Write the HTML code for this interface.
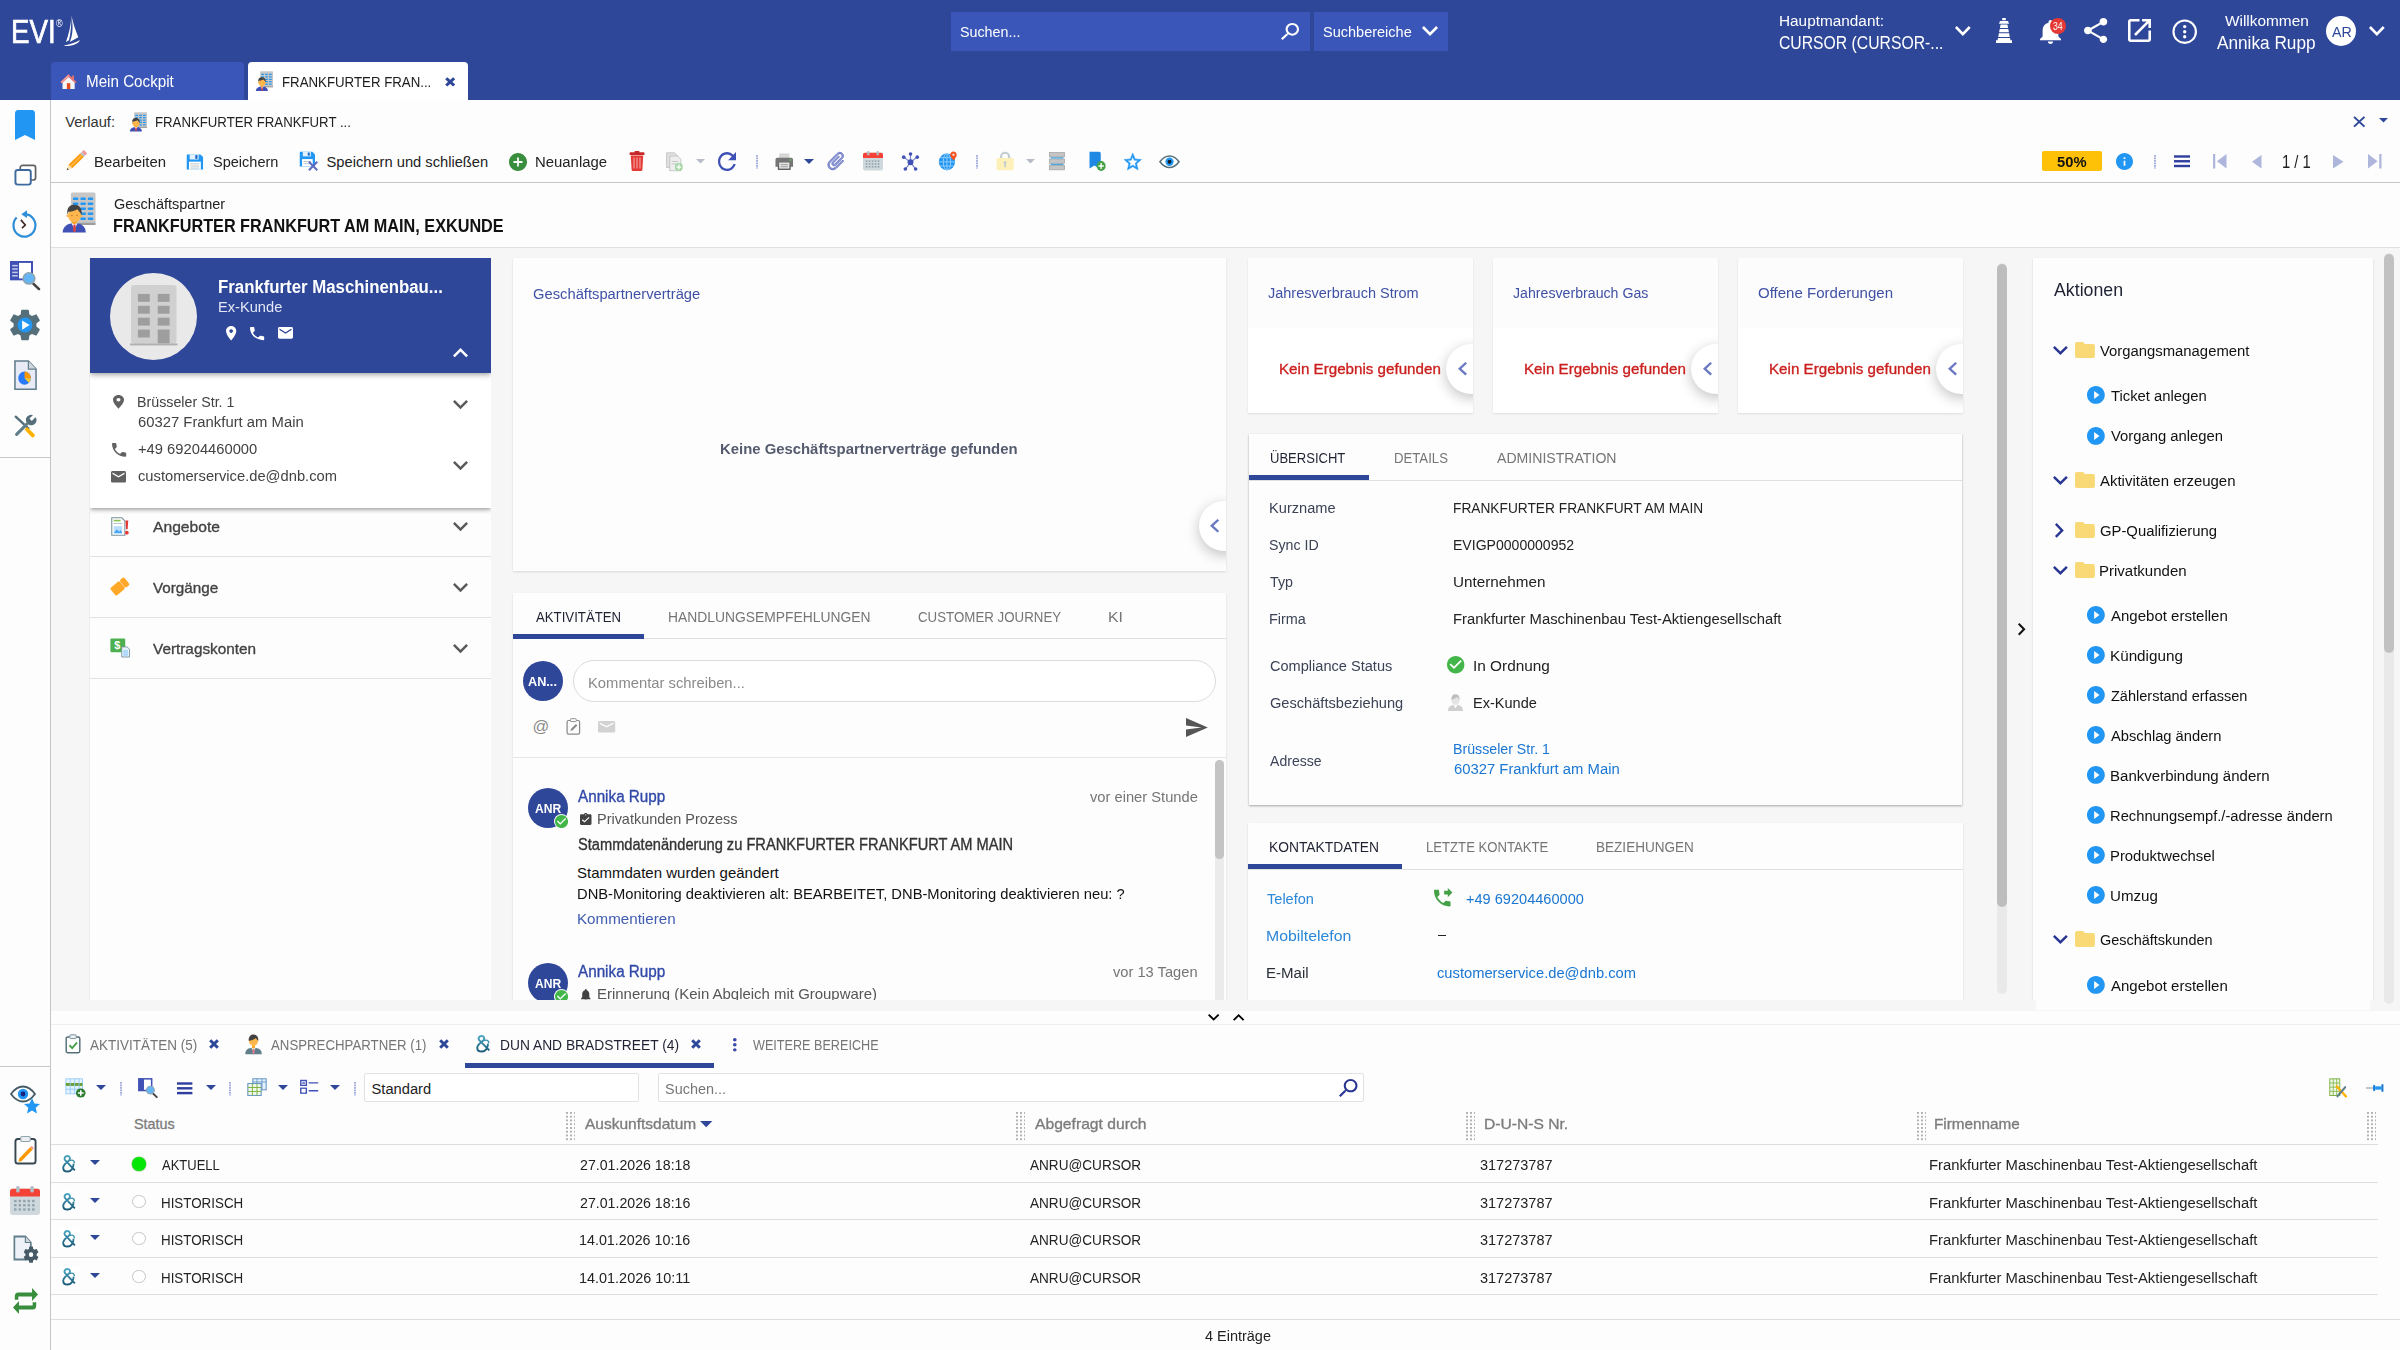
<!DOCTYPE html>
<html lang="de"><head><meta charset="utf-8"><title>EVI - Geschäftspartner</title>
<style>
*{box-sizing:border-box;margin:0;padding:0}
html,body{width:2400px;height:1350px;overflow:hidden;background:#fdfdfd}
body{position:relative;font-family:"Liberation Sans",sans-serif;font-size:15.5px;color:#222}
div,span,svg,header,nav,main,section,h1,h2,a,input,button,ul,li{position:absolute}
.tx{white-space:nowrap;line-height:1.3;transform-origin:0 50%;display:block}
svg{overflow:visible}
</style></head>
<body>
<header style="left:0;top:0;width:2400px;height:100px;background:#2e4799">
<span id="t1" class="tx" style="left:10.89px;top:10.62px;font-size:32.4px;-webkit-text-stroke:0.71px currentColor;color:#fff;transform:scaleX(0.8542)">EVI</span>
<span id="t2" class="tx" style="left:55.80px;top:17.31px;font-size:10px;color:#fff;transform:scaleX(0.9000)">®</span>
<svg class="ic ic-sail" viewBox="63 15 18 31.5" preserveAspectRatio="none" style="left:63px;top:15px;width:18px;height:31.5px;"><path fill="#fff" d="M71.4 15.1C72.6 22 75.5 30.500 78.3 37.3L69.8 42.1C72 37 73.2 30 72.2 22zM71.3 17.1C70.8 26 68.5 35 66 42.1L69 40.3C70.6 34 71.4 26 71.3 17.1zM63.5 45.6C69 44.8 75 43 80.1 40.050C78.5 43.500 75 45 70 45.800C67 46.2 64.5 46.2 63.5 45.6z"/></svg>
<div class="search" style="left:951px;top:12px;width:358.5px;height:39px;background:#3a56b8"></div>
<span id="t3" class="tx" style="left:960.08px;top:22.01px;font-size:15.5px;color:#fff;transform:scaleX(0.9219)">Suchen...</span>
<svg class="ic ic-search" viewBox="3 3 17.5 17.5" preserveAspectRatio="none" style="left:1281px;top:23px;width:18px;height:17px;"><g transform="translate(23.5 0) scale(-1 1)"><path fill="#fff" d="M15.5 14h-.79l-.28-.27C15.41 12.59 16 11.11 16 9.5 16 5.91 13.09 3 9.5 3S3 5.91 3 9.5 5.91 16 9.5 16c1.61 0 3.09-.59 4.23-1.57l.27.28v.79l5 4.99L20.49 19l-4.99-5zm-6 0C7.01 14 5 11.99 5 9.5S7.01 5 9.5 5 14 7.01 14 9.5 11.99 14 9.5 14z"/></g></svg>
<div class="btn" style="left:1314px;top:12px;width:134px;height:39px;background:#3a56b8"></div>
<span id="t4" class="tx" style="left:1322.56px;top:22.01px;font-size:15.5px;color:#fff;transform:scaleX(0.9362)">Suchbereiche</span>
<svg class="ic ic-expand_more" viewBox="6 8.59 12 7.41" preserveAspectRatio="none" style="left:1422px;top:26px;width:16px;height:10px;"><path fill="#fff" d="M16.59 8.59L12 13.17 7.41 8.59 6 10l6 6 6-6z"/></svg>
<span id="t5" class="tx" style="left:1779.31px;top:11.01px;font-size:15.5px;color:#fff;transform:scaleX(0.9904)">Hauptmandant:</span>
<span id="t6" class="tx" style="left:1779.45px;top:30.71px;font-size:18.5px;color:#fff;transform:scaleX(0.8508)">CURSOR (CURSOR-...</span>
<svg class="ic ic-expand_more" viewBox="6 8.59 12 7.41" preserveAspectRatio="none" style="left:1955px;top:25.7px;width:15.7px;height:10px;"><path fill="#fff" d="M16.59 8.59L12 13.17 7.41 8.59 6 10l6 6 6-6z"/></svg>
<svg class="ic ic-lighthouse" viewBox="0 0 16 25" preserveAspectRatio="none" style="left:1996px;top:18.4px;width:16px;height:25px;"><path fill="#fff" d="M6.200 0h3.600v2.200H6.200zM4 3h8l1 2.800H3zM4.600 6.600h6.800l.700 3.400H3.900zM3.700 11h8.600l.600 3.300H3.100zM2.900 15.300h10.200l.700 3.700H2.200zM2 20h12l.500 2.200H16V25H0v-2.800h1.500z"/></svg>
<svg class="ic ic-bell" viewBox="4 2.5 16 19.5" preserveAspectRatio="none" style="left:2040px;top:19.5px;width:21px;height:24px;"><path fill="#fff" d="M12 22c1.1 0 2-.9 2-2h-4c0 1.1.89 2 2 2zm6-6v-5c0-3.07-1.64-5.64-4.5-6.32V4c0-.83-.67-1.5-1.5-1.5s-1.5.67-1.5 1.5v.68C7.63 5.36 6 7.92 6 11v5l-2 2v1h16v-1l-2-2z"/></svg>
<div class="badge" style="left:2049.5px;top:18.3px;width:16px;height:16px;background:#e53935;border-radius:50%"></div>
<span id="t7" class="tx" style="left:2052.50px;top:20.31px;font-size:10.5px;color:#fff;transform:scaleX(0.8333)">34</span>
<svg class="ic ic-share" viewBox="3 2 18 19.92" preserveAspectRatio="none" style="left:2083.7px;top:18.4px;width:23.3px;height:25px;"><path fill="#fff" d="M18 16.08c-.76 0-1.44.3-1.96.77L8.91 12.7c.05-.23.09-.46.09-.7s-.04-.47-.09-.7l7.05-4.11c.54.5 1.25.81 2.04.81 1.66 0 3-1.34 3-3s-1.34-3-3-3-3 1.34-3 3c0 .24.04.47.09.7L8.04 9.81C7.5 9.31 6.79 9 6 9c-1.66 0-3 1.34-3 3s1.34 3 3 3c.79 0 1.5-.31 2.04-.81l7.12 4.16c-.05.21-.08.43-.08.65 0 1.61 1.31 2.92 2.92 2.92 1.61 0 2.92-1.31 2.92-2.92s-1.31-2.92-2.92-2.92z"/></svg>
<svg class="ic ic-open_in_new" viewBox="3 3 18 18" preserveAspectRatio="none" style="left:2128.4px;top:19px;width:23px;height:23px;"><path fill="#fff" d="M19 19H5V5h7V3H5c-1.11 0-2 .9-2 2v14c0 1.1.89 2 2 2h14c1.1 0 2-.9 2-2v-7h-2v7zM14 3v2h3.59l-9.83 9.83 1.41 1.41L19 6.41V10h2V3h-7z"/></svg>
<svg class="ic ic-more_circle" viewBox="0 0 24 24" preserveAspectRatio="none" style="left:2172.3px;top:18.5px;width:25.4px;height:25.4px;"><circle cx="12" cy="12" r="10.6" fill="none" stroke="#fff" stroke-width="2"/><circle cx="12" cy="7.2" r="1.6" fill="#fff"/><circle cx="12" cy="12" r="1.6" fill="#fff"/><circle cx="12" cy="16.8" r="1.6" fill="#fff"/></svg>
<span id="t8" class="tx" style="left:2224.60px;top:11.01px;font-size:15.5px;color:#fff;transform:scaleX(0.9929)">Willkommen</span>
<span id="t9" class="tx" style="left:2217.00px;top:30.71px;font-size:18.5px;color:#fff;transform:scaleX(0.9302)">Annika Rupp</span>
<div class="avatar" style="left:2325.6px;top:15.6px;width:30.8px;height:30.8px;background:#fff;border-radius:50%"></div>
<span id="t10" class="tx" style="left:2331.60px;top:22.01px;font-size:15px;color:#2e4799;transform:scaleX(0.9500)">AR</span>
<svg class="ic ic-expand_more" viewBox="6 8.59 12 7.41" preserveAspectRatio="none" style="left:2368.5px;top:25.7px;width:15.7px;height:10px;"><path fill="#fff" d="M16.59 8.59L12 13.17 7.41 8.59 6 10l6 6 6-6z"/></svg>
<div class="tab" style="left:51px;top:62px;width:193px;height:38px;background:#3a56b8;border-radius:4px 4px 0 0"></div>
<svg class="ic ic-home" viewBox="0 0 24 24" preserveAspectRatio="none" style="left:60.4px;top:72.5px;width:17.2px;height:17.5px;"><path d="M3.5 12.500V22h17v-9.500L12 5z" fill="#f5f5f5"/><path d="M12 1.800L0.800 12.200l1.800 1.900L12 5.400l9.400 8.700 1.800-1.900z" fill="#e57373"/><path d="M12 1.800L0.800 12.200l1.800 1.900L12 5.400z" fill="#ef9a9a"/><rect x="9.600" y="14" width="4.800" height="8" fill="#e64a19"/><rect x="17" y="3.500" width="2.600" height="5" fill="#e57373"/></svg>
<span id="t11" class="tx" style="left:85.54px;top:72.01px;font-size:15.8px;color:#fff;transform:scaleX(0.9615)">Mein Cockpit</span>
<div class="tab active" style="left:248px;top:62px;width:220px;height:38px;background:#fff;border-radius:4px 4px 0 0"></div>
<svg class="ic ic-gp" viewBox="0 0 32 40" preserveAspectRatio="none" style="left:256px;top:70.8px;width:17px;height:20px;"><rect x="7.800" y="0.600" width="24.200" height="32" rx="1.500" fill="#c6c6c6"/><rect x="14" y="30.400" width="18" height="2.200" fill="#9e9e9e"/><g fill="#2196f3"><rect x="9.8" y="5.5" width="5.300" height="2.500" rx="0.800"/><rect x="17.2" y="5.5" width="5.300" height="2.500" rx="0.800"/><rect x="24.4" y="5.5" width="5.300" height="2.500" rx="0.800"/><rect x="9.8" y="10.4" width="5.300" height="2.500" rx="0.800"/><rect x="17.2" y="10.4" width="5.300" height="2.500" rx="0.800"/><rect x="24.4" y="10.4" width="5.300" height="2.500" rx="0.800"/><rect x="9.8" y="15.3" width="5.300" height="2.500" rx="0.800"/><rect x="17.2" y="15.3" width="5.300" height="2.500" rx="0.800"/><rect x="24.4" y="15.3" width="5.300" height="2.500" rx="0.800"/><rect x="9.8" y="20.2" width="5.300" height="2.500" rx="0.800"/><rect x="17.2" y="20.2" width="5.300" height="2.500" rx="0.800"/><rect x="24.4" y="20.2" width="5.300" height="2.500" rx="0.800"/><rect x="9.8" y="25.2" width="5.300" height="2.500" rx="0.800"/><rect x="17.2" y="25.2" width="5.300" height="2.500" rx="0.800"/><rect x="24.4" y="25.2" width="5.300" height="2.500" rx="0.800"/></g><path d="M-0.400 40C0 34 4 30.800 11.300 30.800 18.600 30.800 22.300 34 22.400 40z" fill="#3f51b5"/><path d="M8.300 30.800h6l-3 5.700z" fill="#fff"/><path d="M10.200 32h2.200l.300 6.500-1.400 1.200-1.400-1.200z" fill="#d94545"/><rect x="9" y="28" width="4.600" height="3.400" rx="1.500" fill="#ff9800"/><circle cx="4.700" cy="23.500" r="1.400" fill="#ffb74d"/><circle cx="17.800" cy="23.500" r="1.400" fill="#ffb74d"/><ellipse cx="11.250" cy="23" rx="6.200" ry="7.200" fill="#ffb74d"/><path d="M4.300 22.500C3.400 15 7 12.500 11 12.500c4.600 0 8.200 3 7.300 10.200-1.200-2.500-3-4-4.200-5.700-3 2-7 2.600-8.800 2.600z" fill="#424242"/><circle cx="8.700" cy="23.200" r="0.700" fill="#b5762a"/><circle cx="13.800" cy="23.200" r="0.700" fill="#b5762a"/></svg>
<span id="t12" class="tx" style="left:281.84px;top:72.01px;font-size:15.5px;color:#1b1b1b;transform:scaleX(0.8555)">FRANKFURTER FRAN...</span>
<svg class="ic ic-xmark" viewBox="0 0 10 10" preserveAspectRatio="none" style="left:444.8px;top:76.5px;width:10.4px;height:9.6px;"><path d="M1.200 1.200L8.800 8.800M8.800 1.200L1.200 8.800" stroke="#2e4799" stroke-width="3" fill="none"/></svg>
</header>
<nav style="left:0;top:100px;width:51px;height:1250px;background:#fdfdfd;border-right:1px solid #c4c4c4">
</nav>
<svg class="ic ic-bookmark" viewBox="5 3 14 18" preserveAspectRatio="none" style="left:15px;top:110px;width:20px;height:30px;"><path fill="#2196f3" d="M17 3H7c-1.1 0-1.99.9-1.99 2L5 21l7-3 7 3V5c0-1.1-.9-2-2-2z"/></svg>
<svg class="ic ic-copies" viewBox="0 0 24 24" preserveAspectRatio="none" style="left:13.5px;top:164px;width:23px;height:22px;"><rect x="6.500" y="1.500" width="16" height="16" rx="2.500" fill="#fff" stroke="#616161" stroke-width="1.800"/><rect x="1.500" y="6.500" width="16" height="16" rx="2.500" fill="#fff" stroke="#3d6a9e" stroke-width="2"/></svg>
<svg class="ic ic-history" viewBox="11 202 28 36" preserveAspectRatio="none" style="left:11.3px;top:202.8px;width:26.7px;height:35.2px;"><path d="M26 213.500A11.500 11.500 0 1 1 16.900 216.900" fill="none" stroke="#2e8fd8" stroke-width="2.300"/><path d="M21.800 213.400l6-4v8z" fill="#2e8fd8"/><path d="M21.300 219.300l4.700 5.200-3.500 3.300" fill="none" stroke="#3e2723" stroke-width="1.700"/></svg>
<svg class="ic ic-listsearch" viewBox="0 0 30 30" preserveAspectRatio="none" style="left:9.9px;top:261px;width:30px;height:29px;"><rect x="1" y="1" width="21" height="18" fill="#fff" stroke="#3f51b5" stroke-width="2"/><rect x="1" y="1" width="8" height="18" fill="#3f51b5"/><g fill="#c5cae9"><rect x="2.200" y="4" width="5.600" height="1.600"/><rect x="2.200" y="7.500" width="5.600" height="1.600"/><rect x="2.200" y="11" width="5.600" height="1.600"/><rect x="2.200" y="14.500" width="5.600" height="1.600"/></g><path d="M22 22l7 7" stroke="#424242" stroke-width="2.600" stroke-linecap="round"/><circle cx="19" cy="18" r="5.800" fill="#64b5f6" stroke="#90a4ae" stroke-width="1.600"/></svg>
<svg class="ic ic-gearplay" viewBox="0 0 24 24" preserveAspectRatio="none" style="left:9.9px;top:310px;width:30px;height:30px;"><path d="M19.14 12.94c.04-.3.06-.61.06-.94 0-.32-.02-.64-.07-.94l2.03-1.58c.18-.14.23-.41.12-.61l-1.92-3.32c-.12-.22-.37-.29-.59-.22l-2.39.96c-.5-.38-1.03-.7-1.62-.94l-.36-2.54c-.04-.24-.24-.41-.48-.41h-3.84c-.24 0-.43.17-.47.41l-.36 2.54c-.59.24-1.13.57-1.62.94l-2.39-.96c-.22-.08-.47 0-.59.22L2.74 8.87c-.12.21-.08.47.12.61l2.03 1.58c-.05.3-.09.63-.09.94s.02.64.07.94l-2.03 1.58c-.18.14-.23.41-.12.61l1.92 3.32c.12.22.37.29.59.22l2.39-.96c.5.38 1.03.7 1.62.94l.36 2.54c.05.24.24.41.48.41h3.84c.24 0 .44-.17.47-.41l.36-2.54c.59-.24 1.13-.56 1.62-.94l2.39.96c.22.08.47 0 .59-.22l1.92-3.32c.12-.22.07-.47-.12-.61l-2.01-1.58z" fill="#546e7a" transform="translate(12 12) scale(1.270) translate(-12 -12)"/><circle cx="12" cy="12" r="6" fill="#2196f3"/><path d="M9.700 8.300v7.400l6-3.700z" fill="#fff"/></svg>
<svg class="ic ic-report" viewBox="0 0 24 30" preserveAspectRatio="none" style="left:13.5px;top:359.7px;width:23px;height:30.3px;"><path d="M1 1h14l8 8v20H1z" fill="#e8eaf6" stroke="#607d8b" stroke-width="1.600"/><path d="M15 1v8h8" fill="#cfd8dc" stroke="#607d8b" stroke-width="1.200"/><circle cx="11" cy="18" r="6.500" fill="#2979ff"/><path d="M11 18V11.500a6.500 6.500 0 0 1 6.500 6.500z" fill="#ff9800"/><path d="M11 18h6.500a6.500 6.500 0 0 1-2 4.600z" fill="#ffca28"/></svg>
<svg class="ic ic-tools" viewBox="0 0 28 26" preserveAspectRatio="none" style="left:12.7px;top:414px;width:25.3px;height:23.5px;"><path d="M3 3l14 13" stroke="#546e7a" stroke-width="2.600" stroke-linecap="round"/><path d="M15.500 14.500l8 7.500a2.200 2.200 0 0 1-3.200 3.200l-7.500-8z" fill="#ffb300"/><path d="M4 22.500L16.500 10" stroke="#607d8b" stroke-width="3.400" stroke-linecap="round"/><path d="M24.800 3.200l-4 4-2.600-2.600 4-4a6 6 0 0 0-7.600 7.600l3.500 3.500a6 6 0 0 0 7.600-7.600z" fill="#546e7a" transform="translate(0 0.500)"/></svg>
<div style="left:0px;top:457px;width:50px;height:1px;background:#c9c9c9"></div>
<div style="left:0px;top:1066px;width:50px;height:1px;background:#c9c9c9"></div>
<svg class="ic ic-eyestar" viewBox="0 0 30 30" preserveAspectRatio="none" style="left:10px;top:1085px;width:30px;height:30px;"><path d="M1 9C5 3.500 9 1.500 13 1.500S21 3.500 25 9c-4 5.500-8 7.500-12 7.500S5 14.500 1 9z" fill="#fff" stroke="#455a64" stroke-width="1.800"/><circle cx="13" cy="9" r="5.200" fill="#2196f3"/><circle cx="13" cy="9" r="2.400" fill="#1a237e"/><path d="M22 13l2.400 5.400 5.600.500-4.300 3.800 1.300 5.800-5-3-5 3 1.300-5.800-4.300-3.800 5.600-.500z" fill="#2196f3"/></svg>
<svg class="ic ic-clip_pencil" viewBox="0 0 24 30" preserveAspectRatio="none" style="left:13.5px;top:1135px;width:23px;height:30px;"><rect x="1.500" y="4" width="21" height="24.500" rx="2.500" fill="#fff" stroke="#37474f" stroke-width="2"/><rect x="7" y="1.500" width="10" height="5" rx="1.500" fill="#eceff1" stroke="#90a4ae" stroke-width="1.200"/><path d="M5.500 23.500L17 12l2.500 2.500L8 26l-3.200.800z" fill="#ff9800"/><path d="M17 12l1.300-1.300 2.500 2.500-1.300 1.300z" fill="#ef9a9a"/></svg>
<svg class="ic ic-calendar" viewBox="1 1 22 22" preserveAspectRatio="none" style="left:10px;top:1186px;width:30px;height:29px;"><rect x="1" y="3" width="22" height="20" rx="2" fill="#cfd8dc"/><path d="M1 9V5a2 2 0 0 1 2-2h18a2 2 0 0 1 2 2v4z" fill="#f44336"/><rect x="5.500" y="1" width="2.600" height="5" rx="1.200" fill="#b0bec5"/><rect x="15.900" y="1" width="2.600" height="5" rx="1.200" fill="#b0bec5"/><g fill="#90a4ae"><rect x="4" y="11.5" width="1.800" height="1.800"/><rect x="7.3" y="11.5" width="1.800" height="1.800"/><rect x="10.6" y="11.5" width="1.800" height="1.800"/><rect x="13.9" y="11.5" width="1.800" height="1.800"/><rect x="17.2" y="11.5" width="1.800" height="1.800"/><rect x="4" y="14.7" width="1.800" height="1.800"/><rect x="7.3" y="14.7" width="1.800" height="1.800"/><rect x="10.6" y="14.7" width="1.800" height="1.800"/><rect x="13.9" y="14.7" width="1.800" height="1.800"/><rect x="17.2" y="14.7" width="1.800" height="1.800"/><rect x="4" y="17.9" width="1.800" height="1.800"/><rect x="7.3" y="17.9" width="1.800" height="1.800"/><rect x="10.6" y="17.9" width="1.800" height="1.800"/><rect x="13.9" y="17.9" width="1.800" height="1.800"/><rect x="17.2" y="17.9" width="1.800" height="1.800"/></g></svg>
<svg class="ic ic-docgear" viewBox="0 0 30 30" preserveAspectRatio="none" style="left:12.5px;top:1235px;width:27.5px;height:30px;"><path d="M1.500 1.500h12l6 6v17h-18z" fill="#eef1f8" stroke="#607d8b" stroke-width="1.800"/><path d="M13.500 1.500v6h6" fill="#cfd8dc" stroke="#607d8b" stroke-width="1.200"/><path d="M19.14 12.94c.04-.3.06-.61.06-.94 0-.32-.02-.64-.07-.94l2.03-1.58c.18-.14.23-.41.12-.61l-1.92-3.32c-.12-.22-.37-.29-.59-.22l-2.39.96c-.5-.38-1.03-.7-1.62-.94l-.36-2.54c-.04-.24-.24-.41-.48-.41h-3.84c-.24 0-.43.17-.47.41l-.36 2.54c-.59.24-1.13.57-1.62.94l-2.39-.96c-.22-.08-.47 0-.59.22L2.74 8.87c-.12.21-.08.47.12.61l2.03 1.58c-.05.3-.09.63-.09.94s.02.64.07.94l-2.03 1.58c-.18.14-.23.41-.12.61l1.92 3.32c.12.22.37.29.59.22l2.39-.96c.5.38 1.03.7 1.62.94l.36 2.54c.05.24.24.41.48.41h3.84c.24 0 .44-.17.47-.41l.36-2.54c.59-.24 1.13-.56 1.62-.94l2.39.96c.22.08.47 0 .59-.22l1.92-3.32c.12-.22.07-.47-.12-.61l-2.01-1.58z" fill="#455a64" transform="translate(9.500 9.500) scale(0.850)"/><circle cx="19.700" cy="19.700" r="2.400" fill="#fff"/></svg>
<svg class="ic ic-repeat_green" viewBox="1.5 2 21 20" preserveAspectRatio="none" style="left:12.5px;top:1287.5px;width:25px;height:26px;"><path d="M3 11V8.500a3 3 0 0 1 3-3h11.500V2l5 5-5 5V8.500H6V11zM21 13v2.500a3 3 0 0 1-3 3H6.500V22l-5-5 5-5v3.500H18V13z" fill="#388e3c"/></svg>
<section class="topbars" style="left:51px;top:100px;width:2349px;height:148px;background:#fdfdfd">
</section>
<span id="t13" class="tx" style="left:65.20px;top:113.01px;font-size:14.7px;color:#333;transform:scaleX(1.0000)">Verlauf:</span>
<svg class="ic ic-gp" viewBox="0 0 32 40" preserveAspectRatio="none" style="left:130px;top:111.5px;width:17px;height:19.5px;"><rect x="7.800" y="0.600" width="24.200" height="32" rx="1.500" fill="#c6c6c6"/><rect x="14" y="30.400" width="18" height="2.200" fill="#9e9e9e"/><g fill="#2196f3"><rect x="9.8" y="5.5" width="5.300" height="2.500" rx="0.800"/><rect x="17.2" y="5.5" width="5.300" height="2.500" rx="0.800"/><rect x="24.4" y="5.5" width="5.300" height="2.500" rx="0.800"/><rect x="9.8" y="10.4" width="5.300" height="2.500" rx="0.800"/><rect x="17.2" y="10.4" width="5.300" height="2.500" rx="0.800"/><rect x="24.4" y="10.4" width="5.300" height="2.500" rx="0.800"/><rect x="9.8" y="15.3" width="5.300" height="2.500" rx="0.800"/><rect x="17.2" y="15.3" width="5.300" height="2.500" rx="0.800"/><rect x="24.4" y="15.3" width="5.300" height="2.500" rx="0.800"/><rect x="9.8" y="20.2" width="5.300" height="2.500" rx="0.800"/><rect x="17.2" y="20.2" width="5.300" height="2.500" rx="0.800"/><rect x="24.4" y="20.2" width="5.300" height="2.500" rx="0.800"/><rect x="9.8" y="25.2" width="5.300" height="2.500" rx="0.800"/><rect x="17.2" y="25.2" width="5.300" height="2.500" rx="0.800"/><rect x="24.4" y="25.2" width="5.300" height="2.500" rx="0.800"/></g><path d="M-0.400 40C0 34 4 30.800 11.300 30.800 18.600 30.800 22.300 34 22.400 40z" fill="#3f51b5"/><path d="M8.300 30.800h6l-3 5.700z" fill="#fff"/><path d="M10.200 32h2.200l.300 6.500-1.400 1.200-1.400-1.200z" fill="#d94545"/><rect x="9" y="28" width="4.600" height="3.400" rx="1.500" fill="#ff9800"/><circle cx="4.700" cy="23.500" r="1.400" fill="#ffb74d"/><circle cx="17.800" cy="23.500" r="1.400" fill="#ffb74d"/><ellipse cx="11.250" cy="23" rx="6.200" ry="7.200" fill="#ffb74d"/><path d="M4.300 22.500C3.400 15 7 12.500 11 12.500c4.600 0 8.200 3 7.300 10.200-1.200-2.500-3-4-4.200-5.700-3 2-7 2.600-8.800 2.600z" fill="#424242"/><circle cx="8.700" cy="23.200" r="0.700" fill="#b5762a"/><circle cx="13.800" cy="23.200" r="0.700" fill="#b5762a"/></svg>
<span id="t14" class="tx" style="left:154.90px;top:113.01px;font-size:14.7px;color:#222;transform:scaleX(0.8991)">FRANKFURTER FRANKFURT ...</span>
<svg class="ic ic-xthin" viewBox="0 0 12 12" preserveAspectRatio="none" style="left:2352.5px;top:116px;width:12.5px;height:11.5px;"><path d="M1 1L11 11M11 1L1 11" stroke="#2e4799" stroke-width="1.900" fill="none"/></svg>
<svg class="ic ic-tri_down" viewBox="0 0 10 5" preserveAspectRatio="none" style="left:2378.5px;top:117.5px;width:9px;height:4.5px;"><path fill="#2e4799" d="M0 0h10L5 5z"/></svg>
<svg class="ic ic-pencil" viewBox="0 0 24 24" preserveAspectRatio="none" style="left:65.6px;top:151px;width:20.2px;height:19.8px;"><g transform="rotate(45 12 12) translate(12 12) scale(1.22) translate(-12 -12.500)"><rect x="9.500" y="-0.500" width="5" height="3.200" rx="1" fill="#ef9a9a"/><rect x="9.500" y="2.700" width="5" height="1.800" fill="#b0bec5"/><rect x="9.500" y="4.500" width="5" height="16" fill="#ff9800"/><rect x="11.200" y="4.500" width="1.600" height="16" fill="#ffb74d"/><path d="M9.500 20.500h5L12 25.500z" fill="#ffe0b2"/><path d="M11 23.500h2L12 25.500z" fill="#424242"/></g></svg>
<span id="t15" class="tx" style="left:94.19px;top:153.01px;font-size:14.7px;color:#222;transform:scaleX(1.0145)">Bearbeiten</span>
<svg class="ic ic-floppy" viewBox="0 0 24 24" preserveAspectRatio="none" style="left:186px;top:152.5px;width:17.8px;height:17.3px;"><path d="M1 2h18.500L23 5.500V23H1z" fill="#2196f3"/><rect x="5" y="2" width="12" height="7" fill="#e3f2fd"/><rect x="12.500" y="3" width="3" height="5" fill="#1565c0"/><rect x="4" y="12" width="16" height="11" fill="#fff"/><rect x="6" y="14.500" width="12" height="1.200" fill="#b0bec5"/><rect x="6" y="17.500" width="12" height="1.200" fill="#b0bec5"/><rect x="6" y="20.300" width="12" height="1.200" fill="#b0bec5"/></svg>
<span id="t16" class="tx" style="left:213.21px;top:153.01px;font-size:14.7px;color:#222;transform:scaleX(0.9892)">Speichern</span>
<svg class="ic ic-floppy_x" viewBox="0 0 26 26" preserveAspectRatio="none" style="left:299px;top:151px;width:19.8px;height:20px;"><path d="M1 1h16.500L21 4.500V20H1z" fill="#2196f3"/><rect x="5" y="1" width="10.500" height="6" fill="#e3f2fd"/><rect x="11.500" y="2" width="2.600" height="4" fill="#1565c0"/><rect x="4" y="10.500" width="14" height="9.500" fill="#fff"/><rect x="6" y="13" width="10" height="1.100" fill="#b0bec5"/><rect x="6" y="16" width="10" height="1.100" fill="#b0bec5"/><path d="M13 14l11 11M24 14L13 25" stroke="#5c6bc0" stroke-width="2.600" fill="none"/></svg>
<span id="t17" class="tx" style="left:326.50px;top:153.01px;font-size:14.7px;color:#222;transform:scaleX(1.0000)">Speichern und schließen</span>
<svg class="ic ic-add_circle" viewBox="2 2 20 20" preserveAspectRatio="none" style="left:509px;top:152.5px;width:18px;height:18px;"><path fill="#388e3c" d="M12 2C6.48 2 2 6.48 2 12s4.48 10 10 10 10-4.48 10-10S17.52 2 12 2zm5 11h-4v4h-2v-4H7v-2h4V7h2v4h4v2z"/></svg>
<span id="t18" class="tx" style="left:535.49px;top:153.01px;font-size:14.7px;color:#222;transform:scaleX(1.0143)">Neuanlage</span>
<svg class="ic ic-delete" viewBox="0 0 16 20" preserveAspectRatio="none" style="left:629px;top:151px;width:16px;height:20px;"><rect x="5.500" y="0" width="5" height="2" rx="0.800" fill="#c62828"/><rect x="0.500" y="1.300" width="15" height="2.700" rx="1" fill="#c62828"/><path d="M1.800 4.500h12.400l-.800 14a1.500 1.500 0 0 1-1.500 1.500H4.100a1.500 1.500 0 0 1-1.500-1.500z" fill="#e53935"/><g fill="#ef8a87"><rect x="4.300" y="6.500" width="1.500" height="11"/><rect x="7.250" y="6.500" width="1.500" height="11"/><rect x="10.200" y="6.500" width="1.500" height="11"/></g></svg>
<svg class="ic ic-copydoc" viewBox="0 0 24 24" preserveAspectRatio="none" style="left:665px;top:151.5px;width:19px;height:19.5px;"><path d="M2 1h10l4 4v14H2z" fill="#e0e0e0" stroke="#bdbdbd" stroke-width="1"/><path d="M6 5h10l4 4v14H6z" fill="#eeeeee" stroke="#bdbdbd" stroke-width="1"/><g fill="#c8c8c8"><rect x="8.500" y="11" width="8" height="1.300"/><rect x="8.500" y="14" width="8" height="1.300"/></g><circle cx="17.500" cy="18.500" r="5" fill="#a5d6a7"/><path d="M17.500 15.500v6M14.500 18.500h6" stroke="#fff" stroke-width="1.600"/></svg>
<svg class="ic ic-tri_down" viewBox="0 0 10 5" preserveAspectRatio="none" style="left:696px;top:159px;width:9px;height:4.5px;"><path fill="#b8bcc8" d="M0 0h10L5 5z"/></svg>
<svg class="ic ic-refresh" viewBox="4 4 16 16" preserveAspectRatio="none" style="left:718px;top:152px;width:18px;height:19px;"><path fill="#3f51b5" d="M17.65 6.35C16.2 4.9 14.21 4 12 4c-4.42 0-7.99 3.58-7.99 8s3.57 8 7.99 8c3.73 0 6.84-2.55 7.73-6h-2.08c-.82 2.33-3.04 4-5.65 4-3.31 0-6-2.69-6-6s2.69-6 6-6c1.66 0 3.14.69 4.22 1.78L13 11h7V4l-2.35 2.35z"/></svg>
<svg class="ic ic-vsep" viewBox="0 0 2 14" preserveAspectRatio="none" style="left:755.5px;top:154.5px;width:2px;height:13.5px;"><path d="M1 0v14" stroke="#7986cb" stroke-width="1.300" stroke-dasharray="1.700 0.900" fill="none"/></svg>
<svg class="ic ic-print" viewBox="0 0 20 18" preserveAspectRatio="none" style="left:775px;top:153px;width:18.5px;height:17px;"><path d="M4.500 0.500h11v5h-11z" fill="#d6d6d6"/><path d="M2.500 5h15a2 2 0 0 1 2 2v7.500h-19V7a2 2 0 0 1 2-2z" fill="#757575"/><circle cx="16.800" cy="7.300" r="0.900" fill="#66bb6a"/><rect x="3" y="13" width="14" height="5" rx="0.800" fill="#616161"/><rect x="4.500" y="10.200" width="11" height="6.300" fill="#e8e8e8"/><rect x="6" y="11.800" width="8" height="1.100" fill="#9e9e9e"/><rect x="6" y="14" width="8" height="1.100" fill="#9e9e9e"/></svg>
<svg class="ic ic-tri_down" viewBox="0 0 10 5" preserveAspectRatio="none" style="left:804px;top:159px;width:10px;height:5px;"><path fill="#2e4799" d="M0 0h10L5 5z"/></svg>
<svg class="ic ic-attach" viewBox="0 0 24 24" preserveAspectRatio="none" style="left:826px;top:151px;width:20px;height:20px;"><g transform="rotate(45 12 12) translate(12 12) scale(1.080) translate(-12 -12)"><path fill="#9fa8da" stroke="#5c6bc0" stroke-width="0.900" d="M16.500 6v11.500c0 2.210-1.790 4-4 4s-4-1.790-4-4V5c0-1.380 1.120-2.500 2.500-2.500s2.500 1.120 2.500 2.500v10.500c0 .550-.450 1-1 1s-1-.450-1-1V6H10v9.500c0 1.380 1.120 2.500 2.500 2.500s2.500-1.120 2.500-2.500V5c0-2.210-1.790-4-4-4S7 2.790 7 5v12.500c0 3.040 2.460 5.500 5.500 5.500s5.500-2.460 5.500-5.500V6h-1.500z"/></g></svg>
<svg class="ic ic-calendar" viewBox="1 1 22 22" preserveAspectRatio="none" style="left:863px;top:151px;width:20px;height:19.5px;"><rect x="1" y="3" width="22" height="20" rx="2" fill="#cfd8dc"/><path d="M1 9V5a2 2 0 0 1 2-2h18a2 2 0 0 1 2 2v4z" fill="#f44336"/><rect x="5.500" y="1" width="2.600" height="5" rx="1.200" fill="#b0bec5"/><rect x="15.900" y="1" width="2.600" height="5" rx="1.200" fill="#b0bec5"/><g fill="#90a4ae"><rect x="4" y="11.5" width="1.800" height="1.800"/><rect x="7.3" y="11.5" width="1.800" height="1.800"/><rect x="10.6" y="11.5" width="1.800" height="1.800"/><rect x="13.9" y="11.5" width="1.800" height="1.800"/><rect x="17.2" y="11.5" width="1.800" height="1.800"/><rect x="4" y="14.7" width="1.800" height="1.800"/><rect x="7.3" y="14.7" width="1.800" height="1.800"/><rect x="10.6" y="14.7" width="1.800" height="1.800"/><rect x="13.9" y="14.7" width="1.800" height="1.800"/><rect x="17.2" y="14.7" width="1.800" height="1.800"/><rect x="4" y="17.9" width="1.800" height="1.800"/><rect x="7.3" y="17.9" width="1.800" height="1.800"/><rect x="10.6" y="17.9" width="1.800" height="1.800"/><rect x="13.9" y="17.9" width="1.800" height="1.800"/><rect x="17.2" y="17.9" width="1.800" height="1.800"/></g></svg>
<svg class="ic ic-network" viewBox="0 0 24 24" preserveAspectRatio="none" style="left:901px;top:152px;width:19px;height:19px;"><g stroke="#7986cb" stroke-width="1.500"><path d="M12 13L3.500 6.500M12 13l8.500-6.500M12 13L5.500 21.500M12 13l6.500 8.500M12 13V2.500"/></g><circle cx="12" cy="13" r="3.700" fill="#3f51b5"/><g fill="#3f51b5"><circle cx="3.500" cy="6.500" r="2.300"/><circle cx="20.500" cy="6.500" r="2.300"/><circle cx="5.500" cy="21.500" r="2.300"/><circle cx="18.500" cy="21.500" r="2.300"/><circle cx="12" cy="2.500" r="2.300"/></g></svg>
<svg class="ic ic-globe" viewBox="0 0 24 24" preserveAspectRatio="none" style="left:938px;top:151px;width:19.5px;height:20px;"><circle cx="11" cy="13" r="10" fill="#2196f3"/><g fill="none" stroke="#90caf9" stroke-width="1.200"><ellipse cx="11" cy="13" rx="4.500" ry="10"/><path d="M1 13h20M2.500 8h17M2.500 18h17M11 3v20"/></g><path d="M19 0.500c-2.200 0-4 1.700-4 3.900 0 3 4 6.600 4 6.600s4-3.600 4-6.600c0-2.200-1.800-3.900-4-3.900z" fill="#f4511e"/><circle cx="19" cy="4.400" r="1.500" fill="#ffccbc"/></svg>
<svg class="ic ic-vsep" viewBox="0 0 2 14" preserveAspectRatio="none" style="left:976px;top:154.5px;width:2px;height:13.5px;"><path d="M1 0v14" stroke="#7986cb" stroke-width="1.300" stroke-dasharray="1.700 0.900" fill="none"/></svg>
<svg class="ic ic-lock_pale" viewBox="0 0 18 20" preserveAspectRatio="none" style="left:995.8px;top:151px;width:18.2px;height:19.8px;"><path d="M5 8V5.800a4 4 0 0 1 8 0V8" fill="none" stroke="#c3ccd1" stroke-width="2.200"/><rect x="0.500" y="7" width="17" height="12.500" rx="1.300" fill="#fdf0b8"/><circle cx="9" cy="11.800" r="1.500" fill="#c3ccd1"/><rect x="8.200" y="11.800" width="1.600" height="4.800" rx="0.500" fill="#c3ccd1"/></svg>
<svg class="ic ic-tri_down" viewBox="0 0 10 5" preserveAspectRatio="none" style="left:1026px;top:159px;width:9px;height:4.5px;"><path fill="#b8bcc8" d="M0 0h10L5 5z"/></svg>
<svg class="ic ic-stack" viewBox="0 0 16 18" preserveAspectRatio="none" style="left:1049px;top:151.7px;width:16px;height:18.3px;"><g fill="#c4c4c4" stroke="#a8a8a8" stroke-width="0.800"><rect x="0.500" y="0.500" width="15" height="4.200"/><rect x="0.500" y="6.900" width="15" height="4.200"/><rect x="0.500" y="13.300" width="15" height="4.200"/></g><g fill="#4fa8dc"><rect x="1.500" y="5.100" width="13" height="1.400"/><rect x="1.500" y="11.500" width="13" height="1.400"/></g></svg>
<svg class="ic ic-bookmark_plus" viewBox="0 0 24 24" preserveAspectRatio="none" style="left:1087.5px;top:151px;width:18px;height:20px;"><path d="M3 1h13a2 2 0 0 1 2 2v19l-8.500-4.500L3 21z" fill="#1e88e5" transform="translate(-1 0)"/><circle cx="17.500" cy="18" r="6" fill="#43a047"/><path d="M17.500 14.500v7M14 18h7" stroke="#fff" stroke-width="1.800"/></svg>
<svg class="ic ic-star_border" viewBox="2 2 20 19" preserveAspectRatio="none" style="left:1123.5px;top:152.5px;width:17.5px;height:17px;stroke:#2196f3;stroke-width:0.5"><path fill="#2196f3" d="M22 9.24l-7.19-.62L12 2 9.19 8.63 2 9.24l5.46 4.73L5.82 21 12 17.27 18.18 21l-1.63-7.03L22 9.24zM12 15.4l-3.76 2.27 1-4.28-3.32-2.88 4.38-.38L12 6.1l1.71 4.04 4.38.38-3.32 2.88 1 4.28L12 15.4z"/></svg>
<svg class="ic ic-eye_icon" viewBox="0 0 22 14" preserveAspectRatio="none" style="left:1158.5px;top:154.5px;width:21px;height:13.5px;"><path d="M1 7C4.500 2.300 7.800 1 11 1s6.500 1.300 10 6c-3.500 4.700-6.800 6-10 6S4.500 11.700 1 7z" fill="#fff" stroke="#546e7a" stroke-width="1.600"/><circle cx="11" cy="7" r="4.300" fill="#2196f3"/><circle cx="11" cy="7" r="2" fill="#0d1b2a"/></svg>
<div class="pct" style="left:2042px;top:151px;width:60px;height:20px;background:#ffc107;border-radius:2px"></div>
<span id="t19" class="tx" style="left:2057.00px;top:152.01px;font-size:15px;font-weight:700;color:#111;transform:scaleX(0.9833)">50%</span>
<svg class="ic ic-info" viewBox="2 2 20 20" preserveAspectRatio="none" style="left:2116px;top:152.5px;width:17px;height:17px;"><path fill="#2196f3" d="M12 2C6.48 2 2 6.48 2 12s4.48 10 10 10 10-4.48 10-10S17.52 2 12 2zm1 15h-2v-6h2v6zm0-8h-2V7h2v2z"/></svg>
<svg class="ic ic-vsep" viewBox="0 0 2 14" preserveAspectRatio="none" style="left:2153.5px;top:154.5px;width:2px;height:13.5px;"><path d="M1 0v14" stroke="#7986cb" stroke-width="1.300" stroke-dasharray="1.700 0.900" fill="none"/></svg>
<svg class="ic ic-menu_bold" viewBox="0 0 16 13" preserveAspectRatio="none" style="left:2174px;top:155px;width:16px;height:12.5px;"><g fill="#303f9f"><rect x="0" y="0.300" width="16" height="2.500"/><rect x="0" y="5.250" width="16" height="2.500"/><rect x="0" y="10.200" width="16" height="2.500"/></g></svg>
<svg class="ic ic-skip_prev" viewBox="6 6 12 12" preserveAspectRatio="none" style="left:2212.5px;top:154px;width:13.5px;height:14.5px;"><path fill="#aeb6dc" d="M6 6h2v12H6zm3.5 6l8.5 6V6z"/></svg>
<svg class="ic ic-tri_left" viewBox="8 6 10 12" preserveAspectRatio="none" style="left:2251.5px;top:154.5px;width:9.5px;height:13.5px;"><path fill="#aeb6dc" d="M18 6v12L8 12z"/></svg>
<span id="t20" class="tx" style="left:2282.18px;top:151.02px;font-size:18px;color:#222;transform:scaleX(0.8235)">1 / 1</span>
<svg class="ic ic-tri_right" viewBox="8 6 10 12" preserveAspectRatio="none" style="left:2332.5px;top:154.5px;width:10.5px;height:13.5px;"><path fill="#aeb6dc" d="M8 6v12l10-6z"/></svg>
<svg class="ic ic-skip_next" viewBox="6 6 12 12" preserveAspectRatio="none" style="left:2367.5px;top:154px;width:13.5px;height:14.5px;"><path fill="#aeb6dc" d="M6 18l8.5-6L6 6v12zM16 6v12h2V6h-2z"/></svg>
<div style="left:51px;top:182px;width:2349px;height:1px;background:#c4c4c4"></div>
<svg class="ic ic-gp" viewBox="0 0 32 40" preserveAspectRatio="none" style="left:62.8px;top:192px;width:32.5px;height:40.5px;"><rect x="7.800" y="0.600" width="24.200" height="32" rx="1.500" fill="#c6c6c6"/><rect x="14" y="30.400" width="18" height="2.200" fill="#9e9e9e"/><g fill="#2196f3"><rect x="9.8" y="5.5" width="5.300" height="2.500" rx="0.800"/><rect x="17.2" y="5.5" width="5.300" height="2.500" rx="0.800"/><rect x="24.4" y="5.5" width="5.300" height="2.500" rx="0.800"/><rect x="9.8" y="10.4" width="5.300" height="2.500" rx="0.800"/><rect x="17.2" y="10.4" width="5.300" height="2.500" rx="0.800"/><rect x="24.4" y="10.4" width="5.300" height="2.500" rx="0.800"/><rect x="9.8" y="15.3" width="5.300" height="2.500" rx="0.800"/><rect x="17.2" y="15.3" width="5.300" height="2.500" rx="0.800"/><rect x="24.4" y="15.3" width="5.300" height="2.500" rx="0.800"/><rect x="9.8" y="20.2" width="5.300" height="2.500" rx="0.800"/><rect x="17.2" y="20.2" width="5.300" height="2.500" rx="0.800"/><rect x="24.4" y="20.2" width="5.300" height="2.500" rx="0.800"/><rect x="9.8" y="25.2" width="5.300" height="2.500" rx="0.800"/><rect x="17.2" y="25.2" width="5.300" height="2.500" rx="0.800"/><rect x="24.4" y="25.2" width="5.300" height="2.500" rx="0.800"/></g><path d="M-0.400 40C0 34 4 30.800 11.300 30.800 18.600 30.800 22.300 34 22.400 40z" fill="#3f51b5"/><path d="M8.300 30.800h6l-3 5.700z" fill="#fff"/><path d="M10.200 32h2.200l.300 6.500-1.400 1.200-1.400-1.200z" fill="#d94545"/><rect x="9" y="28" width="4.600" height="3.400" rx="1.500" fill="#ff9800"/><circle cx="4.700" cy="23.500" r="1.400" fill="#ffb74d"/><circle cx="17.800" cy="23.500" r="1.400" fill="#ffb74d"/><ellipse cx="11.250" cy="23" rx="6.200" ry="7.200" fill="#ffb74d"/><path d="M4.300 22.500C3.400 15 7 12.500 11 12.500c4.600 0 8.200 3 7.300 10.200-1.200-2.500-3-4-4.200-5.700-3 2-7 2.600-8.800 2.600z" fill="#424242"/><circle cx="8.700" cy="23.200" r="0.700" fill="#b5762a"/><circle cx="13.800" cy="23.200" r="0.700" fill="#b5762a"/></svg>
<span id="t21" class="tx" style="left:114.00px;top:195.01px;font-size:14.7px;color:#222;transform:scaleX(0.9867)">Geschäftspartner</span>
<h1 style="left:0;top:0;width:0;height:0;font-weight:normal;font-size:inherit">
<span id="t22" class="tx" style="left:113.10px;top:215.02px;font-size:18px;font-weight:700;color:#111;transform:scaleX(0.9016)">FRANKFURTER FRANKFURT AM MAIN, EXKUNDE</span>
</h1>
<div style="left:51px;top:247px;width:2349px;height:1px;background:#e0e0e0"></div>
<main style="left:51px;top:248px;width:2349px;height:763px;background:#f6f6f6">
</main>
<div style="left:2384px;top:253px;width:10px;height:751px;background:#e9e9e9;border-radius:5px"></div>
<div style="left:2384px;top:254px;width:10px;height:399px;background:#c1c1c1;border-radius:5px"></div>
<div style="left:1997.4px;top:263px;width:9.4px;height:731px;background:#e9e9e9;border-radius:5px"></div>
<div style="left:1997.4px;top:264px;width:9.4px;height:643px;background:#bdbdbd;border-radius:5px"></div>
<svg class="ic ic-chevron_right" viewBox="8.59 6 7.41 12" preserveAspectRatio="none" style="left:2018.3px;top:623px;width:7.5px;height:12.5px;"><path fill="#111" d="M10 6L8.59 7.41 13.17 12l-4.58 4.59L10 18l6-6z"/></svg>
<section class="card gp" style="left:90px;top:258px;width:401px;height:742px;background:#fdfdfd;overflow:hidden;box-shadow:-1px 0 0 #ededed">
<div class="contact" style="left:0;top:115px;width:401px;height:135px;background:#fff;box-shadow:0 1px 5px rgba(0,0,0,.48)"></div>
<div class="gphead" style="left:0;top:0;width:401px;height:115px;background:#2e4799;box-shadow:0 1px 6px rgba(0,0,0,.45)"></div>
</section>
<div style="left:109.7px;top:272.9px;width:87.2px;height:87.2px;background:#e9e9e9;border-radius:50%"></div>
<svg class="ic ic-building" viewBox="0 0 48 64" preserveAspectRatio="none" style="left:129.5px;top:284.3px;width:47.5px;height:63.4px;"><rect x="1" y="1" width="46" height="59" rx="3" fill="#d0d0d0"/><g fill="#9e9e9e"><rect x="8" y="10" width="12" height="8"/><rect x="28" y="10" width="12" height="8"/><rect x="8" y="22" width="12" height="8"/><rect x="28" y="22" width="12" height="8"/><rect x="8" y="34" width="12" height="8"/><rect x="28" y="34" width="12" height="8"/><rect x="8" y="46" width="12" height="8"/><rect x="28" y="46" width="12" height="14"/></g><rect x="0" y="60" width="48" height="2" fill="#b0b0b0"/></svg>
<span id="t23" class="tx" style="left:218.08px;top:274.82px;font-size:18.3px;font-weight:700;color:#fff;transform:scaleX(0.9185)">Frankfurter Maschinenbau...</span>
<span id="t24" class="tx" style="left:218.00px;top:298.20px;font-size:14.7px;color:#e3e7f6;transform:scaleX(0.9968)">Ex-Kunde</span>
<svg class="ic ic-place" viewBox="5 2 14 20" preserveAspectRatio="none" style="left:225.5px;top:325.9px;width:10.3px;height:14.6px;"><path fill="#fff" d="M12 2C8.13 2 5 5.13 5 9c0 5.25 7 13 7 13s7-7.75 7-13c0-3.87-3.13-7-7-7zm0 9.5c-1.38 0-2.5-1.12-2.5-2.5s1.12-2.5 2.5-2.5 2.5 1.12 2.5 2.5-1.12 2.5-2.5 2.5z"/></svg>
<svg class="ic ic-phone" viewBox="3 3 18 18" preserveAspectRatio="none" style="left:250.4px;top:326.5px;width:14.2px;height:13.2px;"><path fill="#fff" d="M6.62 10.79c1.44 2.83 3.76 5.14 6.59 6.59l2.2-2.2c.27-.27.67-.36 1.02-.24 1.12.37 2.33.57 3.57.57.55 0 1 .45 1 1V20c0 .55-.45 1-1 1-9.39 0-17-7.61-17-17 0-.55.45-1 1-1h3.5c.55 0 1 .45 1 1 0 1.25.2 2.45.57 3.57.11.35.03.74-.25 1.02l-2.2 2.2z"/></svg>
<svg class="ic ic-mail" viewBox="2 4 20 16" preserveAspectRatio="none" style="left:278px;top:327px;width:15px;height:11.8px;"><path fill="#fff" d="M20 4H4c-1.1 0-1.99.9-1.99 2L2 18c0 1.1.9 2 2 2h16c1.1 0 2-.9 2-2V6c0-1.1-.9-2-2-2zm0 4l-8 5-8-5V6l8 5 8-5v2z"/></svg>
<svg class="ic ic-expand_less" viewBox="6 8 12 7.41" preserveAspectRatio="none" style="left:452.5px;top:348.3px;width:15px;height:9.2px;"><path fill="#fff" d="M12 8l-6 6 1.41 1.41L12 10.83l4.59 4.58L18 14z"/></svg>
<svg class="ic ic-place" viewBox="5 2 14 20" preserveAspectRatio="none" style="left:113px;top:395px;width:11px;height:13.7px;"><path fill="#616161" d="M12 2C8.13 2 5 5.13 5 9c0 5.25 7 13 7 13s7-7.75 7-13c0-3.87-3.13-7-7-7zm0 9.5c-1.38 0-2.5-1.12-2.5-2.5s1.12-2.5 2.5-2.5 2.5 1.12 2.5 2.5-1.12 2.5-2.5 2.5z"/></svg>
<span id="t25" class="tx" style="left:136.63px;top:393.01px;font-size:14.7px;color:#424242;transform:scaleX(0.9707)">Brüsseler Str. 1</span>
<span id="t26" class="tx" style="left:137.60px;top:412.70px;font-size:14.7px;color:#424242;transform:scaleX(1.0098)">60327 Frankfurt am Main</span>
<svg class="ic ic-expand_more" viewBox="6 8.59 12 7.41" preserveAspectRatio="none" style="left:452.5px;top:399.5px;width:15px;height:9.2px;"><path fill="#5a5a5a" d="M16.59 8.59L12 13.17 7.41 8.59 6 10l6 6 6-6z"/></svg>
<svg class="ic ic-phone" viewBox="3 3 18 18" preserveAspectRatio="none" style="left:111.8px;top:442.7px;width:14.2px;height:13.7px;"><path fill="#616161" d="M6.62 10.79c1.44 2.83 3.76 5.14 6.59 6.59l2.2-2.2c.27-.27.67-.36 1.02-.24 1.12.37 2.33.57 3.57.57.55 0 1 .45 1 1V20c0 .55-.45 1-1 1-9.39 0-17-7.61-17-17 0-.55.45-1 1-1h3.5c.55 0 1 .45 1 1 0 1.25.2 2.45.57 3.57.11.35.03.74-.25 1.02l-2.2 2.2z"/></svg>
<span id="t27" class="tx" style="left:137.60px;top:440.01px;font-size:14.7px;color:#424242;transform:scaleX(1.0034)">+49 69204460000</span>
<svg class="ic ic-mail" viewBox="2 4 20 16" preserveAspectRatio="none" style="left:111px;top:471px;width:15px;height:11.6px;"><path fill="#616161" d="M20 4H4c-1.1 0-1.99.9-1.99 2L2 18c0 1.1.9 2 2 2h16c1.1 0 2-.9 2-2V6c0-1.1-.9-2-2-2zm0 4l-8 5-8-5V6l8 5 8-5v2z"/></svg>
<span id="t28" class="tx" style="left:137.60px;top:467.20px;font-size:14.7px;color:#424242;transform:scaleX(1.0020)">customerservice.de@dnb.com</span>
<svg class="ic ic-expand_more" viewBox="6 8.59 12 7.41" preserveAspectRatio="none" style="left:452.5px;top:460.8px;width:15px;height:9.2px;"><path fill="#5a5a5a" d="M16.59 8.59L12 13.17 7.41 8.59 6 10l6 6 6-6z"/></svg>
<svg class="ic ic-offer" viewBox="0 0 24 24" preserveAspectRatio="none" style="left:111px;top:516.7px;width:18.5px;height:19px;"><path d="M1 1h13l4 4v18H1z" fill="#fff" stroke="#78909c" stroke-width="1.400"/><rect x="3.500" y="3.500" width="9" height="2" fill="#8bc34a"/><rect x="3.500" y="7.500" width="11" height="1.200" fill="#b0bec5"/><rect x="3.500" y="11.500" width="11" height="9" fill="#bbdefb"/><path d="M3.500 20.500l4-5 3 3 2-2 2 4z" fill="#42a5f5"/><path d="M18.800 4.500h3.600l-.800 11h-2z" fill="#e53935"/><circle cx="20.600" cy="19.800" r="2.400" fill="#e53935"/></svg>
<span id="t29" class="tx" style="left:153.00px;top:517.31px;font-size:15px;-webkit-text-stroke:0.33px currentColor;color:#424242;transform:scaleX(1.0437)">Angebote</span>
<svg class="ic ic-expand_more" viewBox="6 8.59 12 7.41" preserveAspectRatio="none" style="left:452.5px;top:522px;width:15px;height:9.2px;"><path fill="#5a5a5a" d="M16.59 8.59L12 13.17 7.41 8.59 6 10l6 6 6-6z"/></svg>
<div style="left:90px;top:556px;width:401px;height:1px;background:#e2e2e2"></div>
<svg class="ic ic-ticket" viewBox="0 0 20 19" preserveAspectRatio="none" style="left:110px;top:577.3px;width:19.8px;height:19px;"><g transform="rotate(-40 10 9.500)"><rect x="1" y="4.500" width="18" height="10" rx="1.600" fill="#ffa726"/><circle cx="13.200" cy="4.500" r="1.100" fill="#fdfdfd"/><circle cx="13.200" cy="14.500" r="1.100" fill="#fdfdfd"/><rect x="12.800" y="5.500" width="0.800" height="8" fill="#ffd08a"/></g></svg>
<span id="t30" class="tx" style="left:153.00px;top:578.31px;font-size:15px;-webkit-text-stroke:0.33px currentColor;color:#424242;transform:scaleX(1.0156)">Vorgänge</span>
<svg class="ic ic-expand_more" viewBox="6 8.59 12 7.41" preserveAspectRatio="none" style="left:452.5px;top:583px;width:15px;height:9.2px;"><path fill="#5a5a5a" d="M16.59 8.59L12 13.17 7.41 8.59 6 10l6 6 6-6z"/></svg>
<div style="left:90px;top:617px;width:401px;height:1px;background:#e2e2e2"></div>
<svg class="ic ic-account" viewBox="0 0 26 24" preserveAspectRatio="none" style="left:109.7px;top:638px;width:20.3px;height:19.4px;"><rect x="0.500" y="0.500" width="19" height="17" rx="1.500" fill="#4caf50"/><text x="5.500" y="14" font-family="Liberation Sans, sans-serif" font-weight="700" font-size="14" fill="#fff">$</text><path d="M15 11h7l3 3v9.500H15z" fill="#e3f2fd" stroke="#78909c" stroke-width="1.100"/><path d="M17 16h6M17 18.500h6M17 21h6" stroke="#64b5f6" stroke-width="1"/></svg>
<span id="t31" class="tx" style="left:153.00px;top:639.01px;font-size:15px;-webkit-text-stroke:0.33px currentColor;color:#424242;transform:scaleX(1.0218)">Vertragskonten</span>
<svg class="ic ic-expand_more" viewBox="6 8.59 12 7.41" preserveAspectRatio="none" style="left:452.5px;top:644px;width:15px;height:9.2px;"><path fill="#5a5a5a" d="M16.59 8.59L12 13.17 7.41 8.59 6 10l6 6 6-6z"/></svg>
<div style="left:90px;top:678px;width:401px;height:1px;background:#e2e2e2"></div>
<section class="card" style="left:513px;top:258px;width:713px;height:313px;background:#fdfdfd;box-shadow:0 1px 2px rgba(0,0,0,.12);overflow:hidden">
<div style="left:685.500px;top:243px;width:50px;height:50px;border-radius:50%;background:#fff;box-shadow:0 4px 14px rgba(0,0,0,.24)"></div>
</section>
<span id="t32" class="tx" style="left:533.00px;top:284.61px;font-size:14.7px;color:#3f51a5;transform:scaleX(1.0042)">Geschäftspartnerverträge</span>
<span id="t33" class="tx" style="left:720.49px;top:440.01px;font-size:14.7px;font-weight:700;color:#555b6e;transform:scaleX(1.0127)">Keine Geschäftspartnerverträge gefunden</span>
<svg class="ic ic-chevron_left" viewBox="8 6 7.41 12" preserveAspectRatio="none" style="left:1210.4px;top:518.7px;width:9.2px;height:13.6px;"><path fill="#6a7ac2" d="M15.41 7.41L14 6l-6 6 6 6 1.41-1.41L10.83 12z"/></svg>
<section class="card" style="left:513px;top:593px;width:713px;height:407px;background:#fdfdfd;box-shadow:0 1px 2px rgba(0,0,0,.12)">
</section>
<div style="left:513px;top:638px;width:713px;height:1px;background:#e0e0e0"></div>
<div style="left:513px;top:634px;width:131px;height:4.6px;background:#2e4799"></div>
<span id="t34" class="tx" style="left:535.80px;top:607.31px;font-size:15px;color:#1f2233;transform:scaleX(0.8802)">AKTIVITÄTEN</span>
<span id="t35" class="tx" style="left:668.38px;top:607.31px;font-size:15px;color:#757575;transform:scaleX(0.9235)">HANDLUNGSEMPFEHLUNGEN</span>
<span id="t36" class="tx" style="left:918.40px;top:607.31px;font-size:15px;color:#757575;transform:scaleX(0.8870)">CUSTOMER JOURNEY</span>
<span id="t37" class="tx" style="left:1108.15px;top:607.31px;font-size:15px;color:#757575;transform:scaleX(1.0500)">KI</span>
<div style="left:522.8px;top:661px;width:40px;height:40px;background:#2e4799;border-radius:50%"></div>
<span id="t38" class="tx" style="left:528.00px;top:673.00px;font-size:13.5px;font-weight:700;color:#fff;transform:scaleX(0.9400)">AN...</span>
<div style="left:573.4px;top:660.3px;width:642.2px;height:41.3px;background:#fff;border:1px solid #dcdcdc;border-radius:21px"></div>
<span id="t39" class="tx" style="left:588.01px;top:672.51px;font-size:15px;color:#8a8a8a;transform:scaleX(0.9854)">Kommentar schreiben...</span>
<span id="t40" class="tx" style="left:532.40px;top:716.01px;font-size:16.5px;color:#8a8a8a;transform:scaleX(1.0000)">@</span>
<svg class="ic ic-clip_edit" viewBox="0 0 20 24" preserveAspectRatio="none" style="left:565.6px;top:717.5px;width:14.7px;height:17.2px;"><rect x="1.500" y="3.500" width="17" height="19" rx="2" fill="none" stroke="#8a8a8a" stroke-width="1.700"/><rect x="6" y="1" width="8" height="4" rx="1" fill="#fff" stroke="#8a8a8a" stroke-width="1.300"/><path d="M6 18l1-3 6.500-6.500 2 2L9 17z" fill="#8a8a8a"/></svg>
<svg class="ic ic-mail" viewBox="2 4 20 16" preserveAspectRatio="none" style="left:597.5px;top:721.2px;width:17.2px;height:11.6px;"><path fill="#d2d2d2" d="M20 4H4c-1.1 0-1.99.9-1.99 2L2 18c0 1.1.9 2 2 2h16c1.1 0 2-.9 2-2V6c0-1.1-.9-2-2-2zm0 4l-8 5-8-5V6l8 5 8-5v2z"/></svg>
<svg class="ic ic-send" viewBox="2 3 21 18" preserveAspectRatio="none" style="left:1186px;top:718px;width:21.8px;height:19px;"><path fill="#555" d="M2.01 21L23 12 2.01 3 2 10l15 2-15 2z"/></svg>
<div style="left:513px;top:757px;width:713px;height:1px;background:#e6e6e6"></div>
<div style="left:1215px;top:760px;width:8.8px;height:240px;background:#ebebeb;border-radius:5px 5px 0 0"></div>
<div style="left:1215px;top:760px;width:8.8px;height:98.7px;background:#c4c4c4;border-radius:5px"></div>
<div style="left:527.8px;top:787.8px;width:40px;height:40px;background:#2e4799;border-radius:50%"></div>
<span id="t41" class="tx" style="left:535.00px;top:799.80px;font-size:13.5px;font-weight:700;color:#fff;transform:scaleX(0.8966)">ANR</span>
<span id="t42" class="tx" style="left:578.00px;top:786.91px;font-size:15.6px;-webkit-text-stroke:0.34px currentColor;color:#3149a8;transform:scaleX(0.9775)">Annika Rupp</span>
<span id="t43" class="tx" style="left:1089.70px;top:786.91px;font-size:15px;color:#757575;transform:scaleX(0.9800)">vor einer Stunde</span>
<div style="left:553.5px;top:813.5px;width:15.5px;height:15.5px;background:#fff;border-radius:50%"></div>
<svg class="ic ic-check_circle" viewBox="2 2 20 20" preserveAspectRatio="none" style="left:554.7px;top:814.7px;width:13.1px;height:13.1px;"><path fill="#43b649" d="M12 2C6.48 2 2 6.48 2 12s4.48 10 10 10 10-4.48 10-10S17.52 2 12 2zm-2 15l-5-5 1.41-1.41L10 14.17l7.59-7.59L19 8l-9 9z"/></svg>
<svg class="ic ic-assign_ok" viewBox="3 1 18 20" preserveAspectRatio="none" style="left:579.7px;top:813.4px;width:11.5px;height:12px;"><path fill="#424242" d="M19 3h-4.18C14.4 1.84 13.3 1 12 1c-1.3 0-2.4.84-2.82 2H5c-1.1 0-2 .9-2 2v14c0 1.1.9 2 2 2h14c1.1 0 2-.9 2-2V5c0-1.1-.9-2-2-2zm-7 0c.55 0 1 .45 1 1s-.45 1-1 1-1-.45-1-1 .45-1 1-1zm-2 14l-4-4 1.41-1.41L10 14.17l6.59-6.59L18 9l-8 8z"/></svg>
<span id="t44" class="tx" style="left:597.44px;top:808.76px;font-size:15px;color:#555;transform:scaleX(0.9628)">Privatkunden Prozess</span>
<span id="t45" class="tx" style="left:578.00px;top:834.71px;font-size:15.6px;-webkit-text-stroke:0.34px currentColor;color:#333;transform:scaleX(0.9384)">Stammdatenänderung zu FRANKFURTER FRANKFURT AM MAIN</span>
<span id="t46" class="tx" style="left:577.00px;top:863.41px;font-size:15px;color:#111;transform:scaleX(1.0000)">Stammdaten wurden geändert</span>
<span id="t47" class="tx" style="left:577.02px;top:883.76px;font-size:15px;color:#111;transform:scaleX(0.9820)">DNB-Monitoring deaktivieren alt: BEARBEITET, DNB-Monitoring deaktivieren neu: ?</span>
<span id="t48" class="tx" style="left:576.99px;top:909.41px;font-size:15px;color:#3f5cb0;transform:scaleX(1.0104)">Kommentieren</span>
<div class="clip" style="left:0;top:0;width:1213px;height:1000px;overflow:hidden;pointer-events:none">
<div style="left:527.8px;top:962.8px;width:40px;height:40px;background:#2e4799;border-radius:50%"></div>
<span id="t49" class="tx" style="left:535.00px;top:974.80px;font-size:13.5px;font-weight:700;color:#fff;transform:scaleX(0.8966)">ANR</span>
<span id="t50" class="tx" style="left:578.00px;top:961.91px;font-size:15.6px;-webkit-text-stroke:0.34px currentColor;color:#3149a8;transform:scaleX(0.9775)">Annika Rupp</span>
<span id="t51" class="tx" style="left:1113.40px;top:961.91px;font-size:15px;color:#757575;transform:scaleX(0.9779)">vor 13 Tagen</span>
<div style="left:553.5px;top:988.5px;width:15.5px;height:15.5px;background:#fff;border-radius:50%"></div>
<svg class="ic ic-check_circle" viewBox="2 2 20 20" preserveAspectRatio="none" style="left:554.7px;top:989.7px;width:13.1px;height:13.1px;"><path fill="#43b649" d="M12 2C6.48 2 2 6.48 2 12s4.48 10 10 10 10-4.48 10-10S17.52 2 12 2zm-2 15l-5-5 1.41-1.41L10 14.17l7.59-7.59L19 8l-9 9z"/></svg>
<svg class="ic ic-bell" viewBox="4 2.5 16 19.5" preserveAspectRatio="none" style="left:581px;top:988.5px;width:9.5px;height:12px;"><path fill="#424242" d="M12 22c1.1 0 2-.9 2-2h-4c0 1.1.89 2 2 2zm6-6v-5c0-3.07-1.64-5.64-4.5-6.32V4c0-.83-.67-1.5-1.5-1.5s-1.5.67-1.5 1.5v.68C7.63 5.36 6 7.92 6 11v5l-2 2v1h16v-1l-2-2z"/></svg>
<span id="t52" class="tx" style="left:597.40px;top:983.76px;font-size:15px;color:#555;transform:scaleX(0.9968)">Erinnerung (Kein Abgleich mit Groupware)</span>
</div>
<section class="card kpi" style="left:1248.3px;top:258.3px;width:224.4px;height:155px;background:#fff;box-shadow:0 1px 2px rgba(0,0,0,.10);overflow:hidden">
<div style="left:0;top:0;width:225px;height:69.500px;background:#fcfcfc"></div>
<div style="left:197.700px;top:85.700px;width:50px;height:50px;border-radius:50%;background:#fff;box-shadow:0 4px 14px rgba(0,0,0,.24)"></div>
</section>
<span id="t53" class="tx" style="left:1267.70px;top:284.31px;font-size:14.7px;color:#3f51a5;transform:scaleX(0.9868)">Jahresverbrauch Strom</span>
<span id="t54" class="tx" style="left:1278.99px;top:359.01px;font-size:15px;-webkit-text-stroke:0.33px currentColor;color:#cb201f;transform:scaleX(1.0107)">Kein Ergebnis gefunden</span>
<svg class="ic ic-chevron_left" viewBox="8 6 7.41 12" preserveAspectRatio="none" style="left:1458.3px;top:362.3px;width:9px;height:13.4px;"><path fill="#6a7ac2" d="M15.41 7.41L14 6l-6 6 6 6 1.41-1.41L10.83 12z"/></svg>
<section class="card kpi" style="left:1493.3px;top:258.3px;width:224.4px;height:155px;background:#fff;box-shadow:0 1px 2px rgba(0,0,0,.10);overflow:hidden">
<div style="left:0;top:0;width:225px;height:69.500px;background:#fcfcfc"></div>
<div style="left:197.700px;top:85.700px;width:50px;height:50px;border-radius:50%;background:#fff;box-shadow:0 4px 14px rgba(0,0,0,.24)"></div>
</section>
<span id="t55" class="tx" style="left:1512.70px;top:284.31px;font-size:14.7px;color:#3f51a5;transform:scaleX(0.9643)">Jahresverbrauch Gas</span>
<span id="t56" class="tx" style="left:1523.99px;top:359.01px;font-size:15px;-webkit-text-stroke:0.33px currentColor;color:#cb201f;transform:scaleX(1.0107)">Kein Ergebnis gefunden</span>
<svg class="ic ic-chevron_left" viewBox="8 6 7.41 12" preserveAspectRatio="none" style="left:1703.3px;top:362.3px;width:9px;height:13.4px;"><path fill="#6a7ac2" d="M15.41 7.41L14 6l-6 6 6 6 1.41-1.41L10.83 12z"/></svg>
<section class="card kpi" style="left:1738.3px;top:258.3px;width:224.4px;height:155px;background:#fff;box-shadow:0 1px 2px rgba(0,0,0,.10);overflow:hidden">
<div style="left:0;top:0;width:225px;height:69.500px;background:#fcfcfc"></div>
<div style="left:197.700px;top:85.700px;width:50px;height:50px;border-radius:50%;background:#fff;box-shadow:0 4px 14px rgba(0,0,0,.24)"></div>
</section>
<span id="t57" class="tx" style="left:1757.70px;top:284.31px;font-size:14.7px;color:#3f51a5;transform:scaleX(1.0229)">Offene Forderungen</span>
<span id="t58" class="tx" style="left:1768.99px;top:359.01px;font-size:15px;-webkit-text-stroke:0.33px currentColor;color:#cb201f;transform:scaleX(1.0107)">Kein Ergebnis gefunden</span>
<svg class="ic ic-chevron_left" viewBox="8 6 7.41 12" preserveAspectRatio="none" style="left:1948.3px;top:362.3px;width:9px;height:13.4px;"><path fill="#6a7ac2" d="M15.41 7.41L14 6l-6 6 6 6 1.41-1.41L10.83 12z"/></svg>
<section class="card" style="left:1249px;top:434px;width:713px;height:371px;background:#fdfdfd;box-shadow:0 1px 2px rgba(0,0,0,.33)">
</section>
<div style="left:1249px;top:479.7px;width:713px;height:1px;background:#e0e0e0"></div>
<div style="left:1249px;top:475.3px;width:119.7px;height:4.6px;background:#2e4799"></div>
<span id="t59" class="tx" style="left:1270.43px;top:448.31px;font-size:15px;color:#1f2233;transform:scaleX(0.8686)">ÜBERSICHT</span>
<span id="t60" class="tx" style="left:1394.12px;top:448.31px;font-size:15px;color:#757575;transform:scaleX(0.8783)">DETAILS</span>
<span id="t61" class="tx" style="left:1496.70px;top:448.31px;font-size:15px;color:#757575;transform:scaleX(0.9394)">ADMINISTRATION</span>
<span id="t62" class="tx" style="left:1269.00px;top:498.70px;font-size:14.7px;color:#3c4356;transform:scaleX(0.9955)">Kurzname</span>
<span id="t63" class="tx" style="left:1452.77px;top:498.70px;font-size:14.7px;color:#222;transform:scaleX(0.9346)">FRANKFURTER FRANKFURT AM MAIN</span>
<span id="t64" class="tx" style="left:1269.03px;top:536.01px;font-size:14.7px;color:#3c4356;transform:scaleX(0.9660)">Sync ID</span>
<span id="t65" class="tx" style="left:1452.74px;top:536.01px;font-size:14.7px;color:#222;transform:scaleX(0.9568)">EVIGP0000000952</span>
<span id="t66" class="tx" style="left:1270.00px;top:572.70px;font-size:14.7px;color:#3c4356;transform:scaleX(0.9696)">Typ</span>
<span id="t67" class="tx" style="left:1452.66px;top:572.70px;font-size:14.7px;color:#222;transform:scaleX(1.0379)">Unternehmen</span>
<span id="t68" class="tx" style="left:1269.02px;top:610.01px;font-size:14.7px;color:#3c4356;transform:scaleX(0.9811)">Firma</span>
<span id="t69" class="tx" style="left:1452.69px;top:610.01px;font-size:14.7px;color:#222;transform:scaleX(1.0092)">Frankfurter Maschinenbau Test-Aktiengesellschaft</span>
<span id="t70" class="tx" style="left:1270.00px;top:657.01px;font-size:14.7px;color:#3c4356;transform:scaleX(0.9919)">Compliance Status</span>
<span id="t71" class="tx" style="left:1472.65px;top:657.01px;font-size:14.7px;color:#222;transform:scaleX(1.0458)">In Ordnung</span>
<svg class="ic ic-check_circle" viewBox="2 2 20 20" preserveAspectRatio="none" style="left:1447px;top:656.3px;width:17.4px;height:17.4px;"><path fill="#43b649" d="M12 2C6.48 2 2 6.48 2 12s4.48 10 10 10 10-4.48 10-10S17.52 2 12 2zm-2 15l-5-5 1.41-1.41L10 14.17l7.59-7.59L19 8l-9 9z"/></svg>
<span id="t72" class="tx" style="left:1270.00px;top:694.31px;font-size:14.7px;color:#3c4356;transform:scaleX(0.9947)">Geschäftsbeziehung</span>
<span id="t73" class="tx" style="left:1472.71px;top:694.31px;font-size:14.7px;color:#222;transform:scaleX(0.9889)">Ex-Kunde</span>
<svg class="ic ic-person_gray" viewBox="0 0 22 24" preserveAspectRatio="none" style="left:1448.3px;top:694px;width:15px;height:17px;"><path d="M0 24c0-6 3.500-9 11-9s11 3 11 9z" fill="#d0d0d0"/><path d="M8 15l3 5 3-5z" fill="#fff"/><circle cx="11" cy="9" r="6" fill="#e4e4e4"/><path d="M4.800 8c0-5 2.700-7.500 6.200-7.500s6.200 2.500 6.200 7.500c-2-1.300-3-2.800-3.500-4-2 2-5 3.500-8.900 4z" fill="#bdbdbd"/></svg>
<span id="t74" class="tx" style="left:1270.00px;top:752.01px;font-size:14.7px;color:#3c4356;transform:scaleX(0.9574)">Adresse</span>
<span id="t75" class="tx" style="left:1452.73px;top:740.01px;font-size:14.7px;color:#1976d2;transform:scaleX(0.9657)">Brüsseler Str. 1</span>
<span id="t76" class="tx" style="left:1453.70px;top:760.01px;font-size:14.7px;color:#1976d2;transform:scaleX(1.0098)">60327 Frankfurt am Main</span>
<section class="card" style="left:1248.300px;top:823.300px;width:714.400px;height:176.700px;background:#fdfdfd;box-shadow:0 1px 2px rgba(0,0,0,.12)">
</section>
<div style="left:1248.3px;top:868.7px;width:714.4px;height:1px;background:#e0e0e0"></div>
<div style="left:1248.3px;top:864.3px;width:153.4px;height:4.6px;background:#2e4799"></div>
<span id="t77" class="tx" style="left:1269.08px;top:837.31px;font-size:15px;color:#1f2233;transform:scaleX(0.9212)">KONTAKTDATEN</span>
<span id="t78" class="tx" style="left:1426.42px;top:837.31px;font-size:15px;color:#757575;transform:scaleX(0.8755)">LETZTE KONTAKTE</span>
<span id="t79" class="tx" style="left:1596.40px;top:837.31px;font-size:15px;color:#757575;transform:scaleX(0.9037)">BEZIEHUNGEN</span>
<span id="t80" class="tx" style="left:1266.70px;top:890.31px;font-size:14.7px;color:#2b87d8;transform:scaleX(0.9915)">Telefon</span>
<svg class="ic ic-phone_fwd" viewBox="3 1 20 20" preserveAspectRatio="none" style="left:1434.3px;top:888.3px;width:18.4px;height:18.4px;"><path fill="#43a047" d="M18 11l5-5-5-5v3h-4v4h4v3zm2 4.5c-1.25 0-2.45-.2-3.57-.57-.35-.11-.74-.03-1.02.24l-2.2 2.2c-2.83-1.44-5.15-3.75-6.59-6.59l2.2-2.21c.28-.26.36-.65.25-1C8.7 6.45 8.5 5.25 8.5 4c0-.55-.45-1-1-1H4c-.55 0-1 .45-1 1 0 9.39 7.61 17 17 17 .55 0 1-.45 1-1v-3.5c0-.55-.45-1-1-1z"/></svg>
<span id="t81" class="tx" style="left:1466.00px;top:890.31px;font-size:14.7px;color:#1976d2;transform:scaleX(0.9916)">+49 69204460000</span>
<span id="t82" class="tx" style="left:1265.62px;top:927.31px;font-size:14.7px;color:#2b87d8;transform:scaleX(1.0769)">Mobiltelefon</span>
<div style="left:1438.3px;top:935.2px;width:7.7px;height:1.3px;background:#222"></div>
<span id="t83" class="tx" style="left:1265.67px;top:964.31px;font-size:14.7px;color:#2a2f3a;transform:scaleX(1.0250)">E-Mail</span>
<span id="t84" class="tx" style="left:1437.30px;top:964.31px;font-size:14.7px;color:#1976d2;transform:scaleX(1.0020)">customerservice.de@dnb.com</span>
<section class="card actions" style="left:2033px;top:258px;width:340px;height:742px;background:#fdfdfd;box-shadow:0 1px 2px rgba(0,0,0,.15)">
</section>
<h2 style="left:0;top:0;width:0;height:0;font-weight:normal;font-size:inherit">
<span id="t85" class="tx" style="left:2053.70px;top:278.30px;font-size:18.6px;color:#1f2233;transform:scaleX(0.9542)">Aktionen</span>
</h2>
<svg class="ic ic-expand_more" viewBox="6 8.59 12 7.41" preserveAspectRatio="none" style="left:2052.8px;top:345.7px;width:14.8px;height:8.9px;"><path fill="#283593" d="M16.59 8.59L12 13.17 7.41 8.59 6 10l6 6 6-6z"/></svg>
<svg class="ic ic-folder" viewBox="2 4 20 16" preserveAspectRatio="none" style="left:2075px;top:341.6px;width:19.9px;height:16px;"><path fill="#f9d976" d="M10 4H4c-1.1 0-1.99.9-1.99 2L2 18c0 1.1.9 2 2 2h16c1.1 0 2-.9 2-2V8c0-1.1-.9-2-2-2h-8l-2-2z"/></svg>
<span id="t86" class="tx" style="left:2100.20px;top:341.81px;font-size:14.7px;color:#111;transform:scaleX(1.0108)">Vorgangsmanagement</span>
<svg class="ic ic-play_circle" viewBox="2 2 20 20" preserveAspectRatio="none" style="left:2086.8px;top:386.1px;width:17.8px;height:17.8px;"><path fill="#2196f3" d="M12 2C6.48 2 2 6.48 2 12s4.48 10 10 10 10-4.48 10-10S17.52 2 12 2zm-2 14.5v-9l6 4.5-6 4.5z"/></svg>
<span id="t87" class="tx" style="left:2111.40px;top:386.90px;font-size:14.7px;color:#111;transform:scaleX(1.0085)">Ticket anlegen</span>
<svg class="ic ic-play_circle" viewBox="2 2 20 20" preserveAspectRatio="none" style="left:2086.8px;top:426.6px;width:17.8px;height:17.8px;"><path fill="#2196f3" d="M12 2C6.48 2 2 6.48 2 12s4.48 10 10 10 10-4.48 10-10S17.52 2 12 2zm-2 14.5v-9l6 4.5-6 4.5z"/></svg>
<span id="t88" class="tx" style="left:2111.40px;top:427.40px;font-size:14.7px;color:#111;transform:scaleX(1.0090)">Vorgang anlegen</span>
<svg class="ic ic-expand_more" viewBox="6 8.59 12 7.41" preserveAspectRatio="none" style="left:2052.8px;top:475.7px;width:14.8px;height:8.9px;"><path fill="#283593" d="M16.59 8.59L12 13.17 7.41 8.59 6 10l6 6 6-6z"/></svg>
<svg class="ic ic-folder" viewBox="2 4 20 16" preserveAspectRatio="none" style="left:2075px;top:471.6px;width:19.9px;height:16px;"><path fill="#f9d976" d="M10 4H4c-1.1 0-1.99.9-1.99 2L2 18c0 1.1.9 2 2 2h16c1.1 0 2-.9 2-2V8c0-1.1-.9-2-2-2h-8l-2-2z"/></svg>
<span id="t89" class="tx" style="left:2100.20px;top:471.81px;font-size:14.7px;color:#111;transform:scaleX(1.0180)">Aktivitäten erzeugen</span>
<svg class="ic ic-chevron_right" viewBox="8.59 6 7.41 12" preserveAspectRatio="none" style="left:2055.2px;top:522.6px;width:8.8px;height:14.8px;"><path fill="#283593" d="M10 6L8.59 7.41 13.17 12l-4.58 4.59L10 18l6-6z"/></svg>
<svg class="ic ic-folder" viewBox="2 4 20 16" preserveAspectRatio="none" style="left:2075px;top:521.6px;width:19.9px;height:16px;"><path fill="#f9d976" d="M10 4H4c-1.1 0-1.99.9-1.99 2L2 18c0 1.1.9 2 2 2h16c1.1 0 2-.9 2-2V8c0-1.1-.9-2-2-2h-8l-2-2z"/></svg>
<span id="t90" class="tx" style="left:2100.20px;top:521.81px;font-size:14.7px;color:#111;transform:scaleX(1.0096)">GP-Qualifizierung</span>
<svg class="ic ic-expand_more" viewBox="6 8.59 12 7.41" preserveAspectRatio="none" style="left:2052.8px;top:565.7px;width:14.8px;height:8.9px;"><path fill="#283593" d="M16.59 8.59L12 13.17 7.41 8.59 6 10l6 6 6-6z"/></svg>
<svg class="ic ic-folder" viewBox="2 4 20 16" preserveAspectRatio="none" style="left:2075px;top:561.6px;width:19.9px;height:16px;"><path fill="#f9d976" d="M10 4H4c-1.1 0-1.99.9-1.99 2L2 18c0 1.1.9 2 2 2h16c1.1 0 2-.9 2-2V8c0-1.1-.9-2-2-2h-8l-2-2z"/></svg>
<span id="t91" class="tx" style="left:2099.18px;top:561.81px;font-size:14.7px;color:#111;transform:scaleX(1.0214)">Privatkunden</span>
<svg class="ic ic-play_circle" viewBox="2 2 20 20" preserveAspectRatio="none" style="left:2086.8px;top:605.8px;width:17.8px;height:17.8px;"><path fill="#2196f3" d="M12 2C6.48 2 2 6.48 2 12s4.48 10 10 10 10-4.48 10-10S17.52 2 12 2zm-2 14.5v-9l6 4.5-6 4.5z"/></svg>
<span id="t92" class="tx" style="left:2111.40px;top:606.61px;font-size:14.7px;color:#111;transform:scaleX(1.0219)">Angebot erstellen</span>
<svg class="ic ic-play_circle" viewBox="2 2 20 20" preserveAspectRatio="none" style="left:2086.8px;top:646.1px;width:17.8px;height:17.8px;"><path fill="#2196f3" d="M12 2C6.48 2 2 6.48 2 12s4.48 10 10 10 10-4.48 10-10S17.52 2 12 2zm-2 14.5v-9l6 4.5-6 4.5z"/></svg>
<span id="t93" class="tx" style="left:2110.36px;top:646.90px;font-size:14.7px;color:#111;transform:scaleX(1.0377)">Kündigung</span>
<svg class="ic ic-play_circle" viewBox="2 2 20 20" preserveAspectRatio="none" style="left:2086.8px;top:686.1px;width:17.8px;height:17.8px;"><path fill="#2196f3" d="M12 2C6.48 2 2 6.48 2 12s4.48 10 10 10 10-4.48 10-10S17.52 2 12 2zm-2 14.5v-9l6 4.5-6 4.5z"/></svg>
<span id="t94" class="tx" style="left:2111.40px;top:686.90px;font-size:14.7px;color:#111;transform:scaleX(0.9883)">Zählerstand erfassen</span>
<svg class="ic ic-play_circle" viewBox="2 2 20 20" preserveAspectRatio="none" style="left:2086.8px;top:726.1px;width:17.8px;height:17.8px;"><path fill="#2196f3" d="M12 2C6.48 2 2 6.48 2 12s4.48 10 10 10 10-4.48 10-10S17.52 2 12 2zm-2 14.5v-9l6 4.5-6 4.5z"/></svg>
<span id="t95" class="tx" style="left:2111.40px;top:726.90px;font-size:14.7px;color:#111;transform:scaleX(1.0018)">Abschlag ändern</span>
<svg class="ic ic-play_circle" viewBox="2 2 20 20" preserveAspectRatio="none" style="left:2086.8px;top:766.1px;width:17.8px;height:17.8px;"><path fill="#2196f3" d="M12 2C6.48 2 2 6.48 2 12s4.48 10 10 10 10-4.48 10-10S17.52 2 12 2zm-2 14.5v-9l6 4.5-6 4.5z"/></svg>
<span id="t96" class="tx" style="left:2110.38px;top:766.90px;font-size:14.7px;color:#111;transform:scaleX(1.0234)">Bankverbindung ändern</span>
<svg class="ic ic-play_circle" viewBox="2 2 20 20" preserveAspectRatio="none" style="left:2086.8px;top:806.1px;width:17.8px;height:17.8px;"><path fill="#2196f3" d="M12 2C6.48 2 2 6.48 2 12s4.48 10 10 10 10-4.48 10-10S17.52 2 12 2zm-2 14.5v-9l6 4.5-6 4.5z"/></svg>
<span id="t97" class="tx" style="left:2110.40px;top:806.90px;font-size:14.7px;color:#111;transform:scaleX(1.0027)">Rechnungsempf./-adresse ändern</span>
<svg class="ic ic-play_circle" viewBox="2 2 20 20" preserveAspectRatio="none" style="left:2086.8px;top:846.1px;width:17.8px;height:17.8px;"><path fill="#2196f3" d="M12 2C6.48 2 2 6.48 2 12s4.48 10 10 10 10-4.48 10-10S17.52 2 12 2zm-2 14.5v-9l6 4.5-6 4.5z"/></svg>
<span id="t98" class="tx" style="left:2110.39px;top:846.90px;font-size:14.7px;color:#111;transform:scaleX(1.0108)">Produktwechsel</span>
<svg class="ic ic-play_circle" viewBox="2 2 20 20" preserveAspectRatio="none" style="left:2086.8px;top:886.1px;width:17.8px;height:17.8px;"><path fill="#2196f3" d="M12 2C6.48 2 2 6.48 2 12s4.48 10 10 10 10-4.48 10-10S17.52 2 12 2zm-2 14.5v-9l6 4.5-6 4.5z"/></svg>
<span id="t99" class="tx" style="left:2110.37px;top:886.90px;font-size:14.7px;color:#111;transform:scaleX(1.0289)">Umzug</span>
<svg class="ic ic-expand_more" viewBox="6 8.59 12 7.41" preserveAspectRatio="none" style="left:2052.8px;top:935.2px;width:14.8px;height:8.9px;"><path fill="#283593" d="M16.59 8.59L12 13.17 7.41 8.59 6 10l6 6 6-6z"/></svg>
<svg class="ic ic-folder" viewBox="2 4 20 16" preserveAspectRatio="none" style="left:2075px;top:931.1px;width:19.9px;height:16px;"><path fill="#f9d976" d="M10 4H4c-1.1 0-1.99.9-1.99 2L2 18c0 1.1.9 2 2 2h16c1.1 0 2-.9 2-2V8c0-1.1-.9-2-2-2h-8l-2-2z"/></svg>
<span id="t100" class="tx" style="left:2100.20px;top:931.31px;font-size:14.7px;color:#111;transform:scaleX(0.9842)">Geschäftskunden</span>
<svg class="ic ic-play_circle" viewBox="2 2 20 20" preserveAspectRatio="none" style="left:2086.8px;top:976.1px;width:17.8px;height:17.8px;"><path fill="#2196f3" d="M12 2C6.48 2 2 6.48 2 12s4.48 10 10 10 10-4.48 10-10S17.52 2 12 2zm-2 14.5v-9l6 4.5-6 4.5z"/></svg>
<span id="t101" class="tx" style="left:2111.40px;top:976.90px;font-size:14.7px;color:#111;transform:scaleX(1.0219)">Angebot erstellen</span>
<div style="left:51px;top:1000px;width:2333px;height:11px;background:#f6f6f6"></div>
<div style="left:2036px;top:1000px;width:334px;height:9.5px;background:#fdfdfd"></div>
<div style="left:51px;top:1011px;width:2349px;height:13px;background:#fdfdfd"></div>
<svg class="ic ic-expand_more" viewBox="6 8.59 12 7.41" preserveAspectRatio="none" style="left:1207.9px;top:1014.4px;width:11.3px;height:6.8px;"><path fill="#000" d="M16.59 8.59L12 13.17 7.41 8.59 6 10l6 6 6-6z"/></svg>
<svg class="ic ic-expand_less" viewBox="6 8 12 7.41" preserveAspectRatio="none" style="left:1232.9px;top:1013.9px;width:11.3px;height:6.8px;"><path fill="#000" d="M12 8l-6 6 1.41 1.41L12 10.83l4.59 4.58L18 14z"/></svg>
<div style="left:51px;top:1024px;width:2349px;height:1px;background:#f0f0f0"></div>
<section class="subarea" style="left:51px;top:1025px;width:2349px;height:325px;background:#fdfdfd">
</section>
<svg class="ic ic-clip_check" viewBox="0 0 20 24" preserveAspectRatio="none" style="left:65px;top:1034px;width:16px;height:20px;"><rect x="1.500" y="3.500" width="17" height="19" rx="2" fill="#fff" stroke="#546e7a" stroke-width="1.800"/><rect x="6" y="1" width="8" height="4.500" rx="1.200" fill="#eceff1" stroke="#78909c" stroke-width="1.200"/><path d="M5.500 13.500l3.500 3.500 6-7" fill="none" stroke="#43a047" stroke-width="2.200"/></svg>
<span id="t102" class="tx" style="left:90.00px;top:1036.01px;font-size:14.7px;color:#757575;transform:scaleX(0.9181)">AKTIVITÄTEN (5)</span>
<svg class="ic ic-xmark" viewBox="0 0 10 10" preserveAspectRatio="none" style="left:209px;top:1039px;width:10px;height:10px;"><path d="M1.200 1.200L8.800 8.800M8.800 1.200L1.200 8.800" stroke="#2e4799" stroke-width="3" fill="none"/></svg>
<svg class="ic ic-person" viewBox="0 0 17 20" preserveAspectRatio="none" style="left:244.5px;top:1033.5px;width:17px;height:20.2px;"><path d="M0.300 20c0-4.300 2.600-6.300 8.200-6.300s8.200 2 8.200 6.300z" fill="#607d8b"/><path d="M6.300 13.700l2.200 3.600 2.200-3.600z" fill="#eceff1"/><path d="M8 14.600h1l.600 3.800-1.100 1.300-1.100-1.300z" fill="#ec7a8a"/><rect x="7" y="10.500" width="3" height="3.600" fill="#ffa726"/><circle cx="8.500" cy="7" r="4.600" fill="#ffb74d"/><path d="M3.700 6.800C3.300 2.600 5.600 0.400 8.500 0.400s5.200 2.200 4.800 6.400c-1.200-.800-2-1.800-2.400-2.800-1.500 1.500-4 2.500-7.200 2.800z" fill="#424242"/></svg>
<span id="t103" class="tx" style="left:271.00px;top:1036.01px;font-size:14.7px;color:#757575;transform:scaleX(0.9012)">ANSPRECHPARTNER (1)</span>
<svg class="ic ic-xmark" viewBox="0 0 10 10" preserveAspectRatio="none" style="left:439px;top:1039px;width:10px;height:10px;"><path d="M1.200 1.200L8.800 8.800M8.800 1.200L1.200 8.800" stroke="#2e4799" stroke-width="3" fill="none"/></svg>
<svg class="ic ic-dnb" viewBox="0 0 15 18" preserveAspectRatio="none" style="left:475.5px;top:1035px;width:14.5px;height:17.5px;"><defs><linearGradient id="dg" x1="0" y1="0" x2="0" y2="1"><stop offset="0" stop-color="#4aa6c2"/><stop offset="1" stop-color="#1a5a76"/></linearGradient></defs><path d="M13.800 15.800L3.300 5.300C1.900 3.700 3 1 5.700 1 8.400 1 9.300 3.600 7.900 5.200 6.400 6.900 1.300 9.500 1.300 13c0 2.600 2.100 4 4.700 4 3.500 0 6.300-3.400 6.500-8.200" fill="none" stroke="url(#dg)" stroke-width="2"/><path d="M8.500 5.800c2-1.200 4.800-.200 4.800 2.500" fill="none" stroke="#3a93b0" stroke-width="1.500"/></svg>
<span id="t104" class="tx" style="left:500.06px;top:1036.01px;font-size:14.7px;color:#1f2233;transform:scaleX(0.9392)">DUN AND BRADSTREET (4)</span>
<svg class="ic ic-xmark" viewBox="0 0 10 10" preserveAspectRatio="none" style="left:691px;top:1039px;width:10px;height:10px;"><path d="M1.200 1.200L8.800 8.800M8.800 1.200L1.200 8.800" stroke="#2e4799" stroke-width="3" fill="none"/></svg>
<div style="left:465px;top:1063.2px;width:249px;height:4.8px;background:#2e4799"></div>
<svg class="ic ic-more_vert" viewBox="10 4 4 16" preserveAspectRatio="none" style="left:732.5px;top:1037.5px;width:3.6px;height:13.5px;"><path fill="#3949ab" d="M12 8c1.1 0 2-.9 2-2s-.9-2-2-2-2 .9-2 2 .9 2 2 2zm0 2c-1.1 0-2 .9-2 2s.9 2 2 2 2-.9 2-2-.9-2-2-2zm0 6c-1.1 0-2 .9-2 2s.9 2 2 2 2-.9 2-2-.9-2-2-2z"/></svg>
<span id="t105" class="tx" style="left:753.00px;top:1036.01px;font-size:14.7px;color:#757575;transform:scaleX(0.8596)">WEITERE BEREICHE</span>
<svg class="ic ic-table_add" viewBox="0 0 24 24" preserveAspectRatio="none" style="left:65px;top:1077.5px;width:21px;height:20px;"><rect x="1" y="1" width="19" height="18" fill="#e3f2fd" stroke="#90caf9" stroke-width="1"/><rect x="1" y="6" width="19" height="3.500" fill="#689f38"/><g stroke="#90caf9" stroke-width="1"><path d="M1 13.500h19M6 1v18M11 1v18M16 1v18"/></g><circle cx="18" cy="18" r="5.500" fill="#2e7d32"/><path d="M18 14.800v6.400M14.800 18h6.400" stroke="#fff" stroke-width="1.700"/></svg>
<svg class="ic ic-tri_down" viewBox="0 0 10 5" preserveAspectRatio="none" style="left:96px;top:1085px;width:10px;height:5px;"><path fill="#2e4799" d="M0 0h10L5 5z"/></svg>
<svg class="ic ic-vsep" viewBox="0 0 2 14" preserveAspectRatio="none" style="left:119.5px;top:1081.5px;width:2px;height:13.5px;"><path d="M1 0v14" stroke="#7986cb" stroke-width="1.300" stroke-dasharray="1.700 0.900" fill="none"/></svg>
<svg class="ic ic-table_search" viewBox="0 0 24 24" preserveAspectRatio="none" style="left:137.5px;top:1078px;width:20.5px;height:20px;"><rect x="1" y="1" width="15" height="14" fill="#fff" stroke="#3f51b5" stroke-width="1.800"/><rect x="1" y="1" width="6" height="14" fill="#3f51b5"/><path d="M17 18l5 5" stroke="#424242" stroke-width="2.200" stroke-linecap="round"/><circle cx="14.500" cy="14.500" r="4.600" fill="#64b5f6" stroke="#90a4ae" stroke-width="1.300"/></svg>
<svg class="ic ic-menu_bold" viewBox="0 0 16 13" preserveAspectRatio="none" style="left:177.3px;top:1081.7px;width:15.4px;height:12.6px;"><g fill="#303f9f"><rect x="0" y="0.300" width="16" height="2.500"/><rect x="0" y="5.250" width="16" height="2.500"/><rect x="0" y="10.200" width="16" height="2.500"/></g></svg>
<svg class="ic ic-tri_down" viewBox="0 0 10 5" preserveAspectRatio="none" style="left:206px;top:1085px;width:10px;height:5px;"><path fill="#2e4799" d="M0 0h10L5 5z"/></svg>
<svg class="ic ic-vsep" viewBox="0 0 2 14" preserveAspectRatio="none" style="left:228.5px;top:1081.5px;width:2px;height:13.5px;"><path d="M1 0v14" stroke="#7986cb" stroke-width="1.300" stroke-dasharray="1.700 0.900" fill="none"/></svg>
<svg class="ic ic-table_cols" viewBox="0 0 24 24" preserveAspectRatio="none" style="left:246.5px;top:1078px;width:20px;height:19px;"><rect x="7" y="1" width="16" height="14" fill="#e3f2fd" stroke="#5c8fc0" stroke-width="1.200"/><rect x="1" y="7" width="16" height="15" fill="#f1f8e9" stroke="#5c8fc0" stroke-width="1.200"/><g stroke="#7cb342" stroke-width="1.200"><path d="M1 12h16M1 17h16M6.500 7v15M12 7v15"/></g><g stroke="#5c8fc0" stroke-width="1"><path d="M7 5h16M12 1v6M18 1v14"/></g></svg>
<svg class="ic ic-tri_down" viewBox="0 0 10 5" preserveAspectRatio="none" style="left:278px;top:1085px;width:10px;height:5px;"><path fill="#2e4799" d="M0 0h10L5 5z"/></svg>
<svg class="ic ic-list_cfg" viewBox="0 0 24 24" preserveAspectRatio="none" style="left:300px;top:1079px;width:19px;height:17px;"><rect x="1" y="2" width="7" height="7" fill="#fff" stroke="#3f51b5" stroke-width="1.800"/><rect x="1" y="13" width="7" height="7" fill="#fff" stroke="#3f51b5" stroke-width="1.800"/><rect x="2.800" y="3.800" width="3.400" height="3.400" fill="#7986cb"/><path d="M11 5.500h12M11 16.500h12" stroke="#3f51b5" stroke-width="2"/></svg>
<svg class="ic ic-tri_down" viewBox="0 0 10 5" preserveAspectRatio="none" style="left:330px;top:1085px;width:10px;height:5px;"><path fill="#2e4799" d="M0 0h10L5 5z"/></svg>
<svg class="ic ic-vsep" viewBox="0 0 2 14" preserveAspectRatio="none" style="left:353.5px;top:1081.5px;width:2px;height:13.5px;"><path d="M1 0v14" stroke="#7986cb" stroke-width="1.300" stroke-dasharray="1.700 0.900" fill="none"/></svg>
<div style="left:364px;top:1073px;width:274.5px;height:28.5px;background:#fff;border:1px solid #e2e2e2;border-radius:2px"></div>
<span id="t106" class="tx" style="left:371.50px;top:1080.01px;font-size:14.7px;color:#222;transform:scaleX(1.0000)">Standard</span>
<div style="left:658px;top:1073px;width:705.5px;height:28.5px;background:#fff;border:1px solid #e2e2e2;border-radius:2px"></div>
<span id="t107" class="tx" style="left:665.02px;top:1080.01px;font-size:14.7px;color:#777;transform:scaleX(0.9833)">Suchen...</span>
<svg class="ic ic-search" viewBox="3 3 17.5 17.5" preserveAspectRatio="none" style="left:1339px;top:1078.5px;width:18.5px;height:18px;"><g transform="translate(23.5 0) scale(-1 1)"><path fill="#283593" d="M15.5 14h-.79l-.28-.27C15.41 12.59 16 11.11 16 9.5 16 5.91 13.09 3 9.5 3S3 5.91 3 9.5 5.91 16 9.5 16c1.61 0 3.09-.59 4.23-1.57l.27.28v.79l5 4.99L20.49 19l-4.99-5zm-6 0C7.01 14 5 11.99 5 9.5S7.01 5 9.5 5 14 7.01 14 9.5 11.99 14 9.5 14z"/></g></svg>
<svg class="ic ic-table_tools" viewBox="0 0 24 24" preserveAspectRatio="none" style="left:2329px;top:1078px;width:18.5px;height:20px;"><rect x="1" y="1" width="13" height="20" fill="#f1f8e9" stroke="#7cb342" stroke-width="1.200"/><g stroke="#7cb342" stroke-width="1"><path d="M1 6h13M1 11h13M1 16h13M5.500 1v20M10 1v20"/></g><path d="M10 10l12 12" stroke="#ffb300" stroke-width="3" stroke-linecap="round"/><path d="M21 11L11 22" stroke="#607d8b" stroke-width="2.600" stroke-linecap="round"/></svg>
<svg class="ic ic-pin" viewBox="0 0 24 12" preserveAspectRatio="none" style="left:2366px;top:1083px;width:19px;height:10px;"><path d="M0 6h9" stroke="#90a4ae" stroke-width="1.400"/><path d="M9 2.500h2.500v7H9z" fill="#1976d2"/><path d="M11.500 4h8v4h-8z" fill="#2196f3"/><path d="M19.500 1.500h2.500v9h-2.500z" fill="#1976d2"/></svg>
<span id="t108" class="tx" style="left:134.00px;top:1115.01px;font-size:14.4px;-webkit-text-stroke:0.32px currentColor;color:#7c7c7c;transform:scaleX(1.0000)">Status</span>
<div style="left:565.6px;top:1111.6px;width:9.4px;height:30px;background-image:linear-gradient(90deg,#b2b2b2 1.600px,transparent 1.600px);background-size:4px 100%;-webkit-mask-image:linear-gradient(180deg,#000 1.600px,transparent 1.600px);-webkit-mask-size:100% 3.750px;mask-image:linear-gradient(180deg,#000 1.600px,transparent 1.600px);mask-size:100% 3.750px"></div>
<span id="t109" class="tx" style="left:585.00px;top:1115.01px;font-size:14.4px;-webkit-text-stroke:0.32px currentColor;color:#7c7c7c;transform:scaleX(1.0777)">Auskunftsdatum</span>
<svg class="ic ic-tri_down" viewBox="0 0 10 5" preserveAspectRatio="none" style="left:699.6px;top:1120.8px;width:12.4px;height:6.2px;"><path fill="#2e4799" d="M0 0h10L5 5z"/></svg>
<div style="left:1016.1px;top:1111.6px;width:9.4px;height:30px;background-image:linear-gradient(90deg,#b2b2b2 1.600px,transparent 1.600px);background-size:4px 100%;-webkit-mask-image:linear-gradient(180deg,#000 1.600px,transparent 1.600px);-webkit-mask-size:100% 3.750px;mask-image:linear-gradient(180deg,#000 1.600px,transparent 1.600px);mask-size:100% 3.750px"></div>
<span id="t110" class="tx" style="left:1035.00px;top:1115.01px;font-size:14.4px;-webkit-text-stroke:0.32px currentColor;color:#7c7c7c;transform:scaleX(1.0882)">Abgefragt durch</span>
<div style="left:1465.6px;top:1111.6px;width:9.4px;height:30px;background-image:linear-gradient(90deg,#b2b2b2 1.600px,transparent 1.600px);background-size:4px 100%;-webkit-mask-image:linear-gradient(180deg,#000 1.600px,transparent 1.600px);-webkit-mask-size:100% 3.750px;mask-image:linear-gradient(180deg,#000 1.600px,transparent 1.600px);mask-size:100% 3.750px"></div>
<span id="t111" class="tx" style="left:1483.91px;top:1115.01px;font-size:14.4px;-webkit-text-stroke:0.32px currentColor;color:#7c7c7c;transform:scaleX(1.0855)">D-U-N-S Nr.</span>
<div style="left:1917.1px;top:1111.6px;width:9.4px;height:30px;background-image:linear-gradient(90deg,#b2b2b2 1.600px,transparent 1.600px);background-size:4px 100%;-webkit-mask-image:linear-gradient(180deg,#000 1.600px,transparent 1.600px);-webkit-mask-size:100% 3.750px;mask-image:linear-gradient(180deg,#000 1.600px,transparent 1.600px);mask-size:100% 3.750px"></div>
<span id="t112" class="tx" style="left:1933.94px;top:1115.01px;font-size:14.4px;-webkit-text-stroke:0.32px currentColor;color:#7c7c7c;transform:scaleX(1.0625)">Firmenname</span>
<div style="left:2367.1px;top:1111.6px;width:9.4px;height:30px;background-image:linear-gradient(90deg,#b2b2b2 1.600px,transparent 1.600px);background-size:4px 100%;-webkit-mask-image:linear-gradient(180deg,#000 1.600px,transparent 1.600px);-webkit-mask-size:100% 3.750px;mask-image:linear-gradient(180deg,#000 1.600px,transparent 1.600px);mask-size:100% 3.750px"></div>
<div style="left:51px;top:1144px;width:2327px;height:1px;background:#dedede"></div>
<div style="left:59px;top:1153px;width:20px;height:19.5px;background:#fff"></div>
<svg class="ic ic-dnb" viewBox="0 0 15 18" preserveAspectRatio="none" style="left:61.5px;top:1154.5px;width:14px;height:17.5px;"><defs><linearGradient id="dg" x1="0" y1="0" x2="0" y2="1"><stop offset="0" stop-color="#4aa6c2"/><stop offset="1" stop-color="#1a5a76"/></linearGradient></defs><path d="M13.800 15.800L3.300 5.300C1.900 3.700 3 1 5.700 1 8.400 1 9.300 3.600 7.900 5.200 6.400 6.900 1.300 9.500 1.300 13c0 2.600 2.100 4 4.700 4 3.500 0 6.300-3.400 6.500-8.200" fill="none" stroke="url(#dg)" stroke-width="2"/><path d="M8.500 5.800c2-1.200 4.800-.200 4.800 2.500" fill="none" stroke="#3a93b0" stroke-width="1.500"/></svg>
<svg class="ic ic-tri_down" viewBox="0 0 10 5" preserveAspectRatio="none" style="left:90px;top:1160px;width:10px;height:5px;"><path fill="#2e4799" d="M0 0h10L5 5z"/></svg>
<div style="left:132.2px;top:1157.2px;width:13.6px;height:13.6px;background:#06e606;border-radius:50%;box-shadow:0 0 0 0.6px rgba(60,160,60,.5)"></div>
<span id="t113" class="tx" style="left:161.50px;top:1156.01px;font-size:14.7px;color:#222;transform:scaleX(0.8846)">AKTUELL</span>
<span id="t114" class="tx" style="left:580.00px;top:1156.01px;font-size:14.7px;color:#222;transform:scaleX(0.9649)">27.01.2026 18:18</span>
<span id="t115" class="tx" style="left:1030.00px;top:1156.01px;font-size:14.7px;color:#222;transform:scaleX(0.9250)">ANRU@CURSOR</span>
<span id="t116" class="tx" style="left:1480.00px;top:1156.01px;font-size:14.7px;color:#222;transform:scaleX(0.9863)">317273787</span>
<span id="t117" class="tx" style="left:1928.99px;top:1156.01px;font-size:14.7px;color:#222;transform:scaleX(1.0092)">Frankfurter Maschinenbau Test-Aktiengesellschaft</span>
<div style="left:51px;top:1182px;width:2327px;height:1px;background:#dedede"></div>
<div style="left:59px;top:1191px;width:20px;height:19.5px;background:#fff"></div>
<svg class="ic ic-dnb" viewBox="0 0 15 18" preserveAspectRatio="none" style="left:61.5px;top:1192.5px;width:14px;height:17.5px;"><defs><linearGradient id="dg" x1="0" y1="0" x2="0" y2="1"><stop offset="0" stop-color="#4aa6c2"/><stop offset="1" stop-color="#1a5a76"/></linearGradient></defs><path d="M13.800 15.800L3.300 5.300C1.900 3.700 3 1 5.700 1 8.400 1 9.300 3.600 7.900 5.200 6.400 6.900 1.300 9.500 1.300 13c0 2.600 2.100 4 4.700 4 3.500 0 6.300-3.400 6.500-8.200" fill="none" stroke="url(#dg)" stroke-width="2"/><path d="M8.500 5.800c2-1.200 4.800-.200 4.800 2.500" fill="none" stroke="#3a93b0" stroke-width="1.500"/></svg>
<svg class="ic ic-tri_down" viewBox="0 0 10 5" preserveAspectRatio="none" style="left:90px;top:1198px;width:10px;height:5px;"><path fill="#2e4799" d="M0 0h10L5 5z"/></svg>
<div style="left:132.3px;top:1195.1px;width:13.4px;height:13.4px;background:#fff;border:1.400px solid #c6c6c6;border-radius:50%"></div>
<span id="t118" class="tx" style="left:160.59px;top:1194.01px;font-size:14.7px;color:#222;transform:scaleX(0.9101)">HISTORISCH</span>
<span id="t119" class="tx" style="left:580.00px;top:1194.01px;font-size:14.7px;color:#222;transform:scaleX(0.9649)">27.01.2026 18:16</span>
<span id="t120" class="tx" style="left:1030.00px;top:1194.01px;font-size:14.7px;color:#222;transform:scaleX(0.9250)">ANRU@CURSOR</span>
<span id="t121" class="tx" style="left:1480.00px;top:1194.01px;font-size:14.7px;color:#222;transform:scaleX(0.9863)">317273787</span>
<span id="t122" class="tx" style="left:1928.99px;top:1194.01px;font-size:14.7px;color:#222;transform:scaleX(1.0092)">Frankfurter Maschinenbau Test-Aktiengesellschaft</span>
<div style="left:51px;top:1219px;width:2327px;height:1px;background:#dedede"></div>
<div style="left:59px;top:1228px;width:20px;height:19.5px;background:#fff"></div>
<svg class="ic ic-dnb" viewBox="0 0 15 18" preserveAspectRatio="none" style="left:61.5px;top:1229.5px;width:14px;height:17.5px;"><defs><linearGradient id="dg" x1="0" y1="0" x2="0" y2="1"><stop offset="0" stop-color="#4aa6c2"/><stop offset="1" stop-color="#1a5a76"/></linearGradient></defs><path d="M13.800 15.800L3.300 5.300C1.900 3.700 3 1 5.700 1 8.400 1 9.300 3.600 7.900 5.200 6.400 6.900 1.300 9.500 1.300 13c0 2.600 2.100 4 4.700 4 3.500 0 6.300-3.400 6.500-8.200" fill="none" stroke="url(#dg)" stroke-width="2"/><path d="M8.500 5.800c2-1.200 4.800-.200 4.800 2.500" fill="none" stroke="#3a93b0" stroke-width="1.500"/></svg>
<svg class="ic ic-tri_down" viewBox="0 0 10 5" preserveAspectRatio="none" style="left:90px;top:1235px;width:10px;height:5px;"><path fill="#2e4799" d="M0 0h10L5 5z"/></svg>
<div style="left:132.3px;top:1232.1px;width:13.4px;height:13.4px;background:#fff;border:1.400px solid #c6c6c6;border-radius:50%"></div>
<span id="t123" class="tx" style="left:160.59px;top:1231.01px;font-size:14.7px;color:#222;transform:scaleX(0.9101)">HISTORISCH</span>
<span id="t124" class="tx" style="left:579.03px;top:1231.01px;font-size:14.7px;color:#222;transform:scaleX(0.9735)">14.01.2026 10:16</span>
<span id="t125" class="tx" style="left:1030.00px;top:1231.01px;font-size:14.7px;color:#222;transform:scaleX(0.9250)">ANRU@CURSOR</span>
<span id="t126" class="tx" style="left:1480.00px;top:1231.01px;font-size:14.7px;color:#222;transform:scaleX(0.9863)">317273787</span>
<span id="t127" class="tx" style="left:1928.99px;top:1231.01px;font-size:14.7px;color:#222;transform:scaleX(1.0092)">Frankfurter Maschinenbau Test-Aktiengesellschaft</span>
<div style="left:51px;top:1257px;width:2327px;height:1px;background:#dedede"></div>
<div style="left:59px;top:1266px;width:20px;height:19.5px;background:#fff"></div>
<svg class="ic ic-dnb" viewBox="0 0 15 18" preserveAspectRatio="none" style="left:61.5px;top:1267.5px;width:14px;height:17.5px;"><defs><linearGradient id="dg" x1="0" y1="0" x2="0" y2="1"><stop offset="0" stop-color="#4aa6c2"/><stop offset="1" stop-color="#1a5a76"/></linearGradient></defs><path d="M13.800 15.800L3.300 5.300C1.900 3.700 3 1 5.700 1 8.400 1 9.300 3.600 7.900 5.200 6.400 6.900 1.300 9.500 1.300 13c0 2.600 2.100 4 4.700 4 3.500 0 6.300-3.400 6.500-8.200" fill="none" stroke="url(#dg)" stroke-width="2"/><path d="M8.500 5.800c2-1.200 4.800-.200 4.800 2.500" fill="none" stroke="#3a93b0" stroke-width="1.500"/></svg>
<svg class="ic ic-tri_down" viewBox="0 0 10 5" preserveAspectRatio="none" style="left:90px;top:1273px;width:10px;height:5px;"><path fill="#2e4799" d="M0 0h10L5 5z"/></svg>
<div style="left:132.3px;top:1270.1px;width:13.4px;height:13.4px;background:#fff;border:1.400px solid #c6c6c6;border-radius:50%"></div>
<span id="t128" class="tx" style="left:160.59px;top:1269.01px;font-size:14.7px;color:#222;transform:scaleX(0.9101)">HISTORISCH</span>
<span id="t129" class="tx" style="left:579.02px;top:1269.01px;font-size:14.7px;color:#222;transform:scaleX(0.9821)">14.01.2026 10:11</span>
<span id="t130" class="tx" style="left:1030.00px;top:1269.01px;font-size:14.7px;color:#222;transform:scaleX(0.9250)">ANRU@CURSOR</span>
<span id="t131" class="tx" style="left:1480.00px;top:1269.01px;font-size:14.7px;color:#222;transform:scaleX(0.9863)">317273787</span>
<span id="t132" class="tx" style="left:1928.99px;top:1269.01px;font-size:14.7px;color:#222;transform:scaleX(1.0092)">Frankfurter Maschinenbau Test-Aktiengesellschaft</span>
<div style="left:51px;top:1294px;width:2327px;height:1px;background:#dedede"></div>
<div style="left:51px;top:1319px;width:2349px;height:1px;background:#dedede"></div>
<span id="t133" class="tx" style="left:1205.00px;top:1327.01px;font-size:14.7px;color:#222;transform:scaleX(0.9851)">4 Einträge</span>
</body></html>
